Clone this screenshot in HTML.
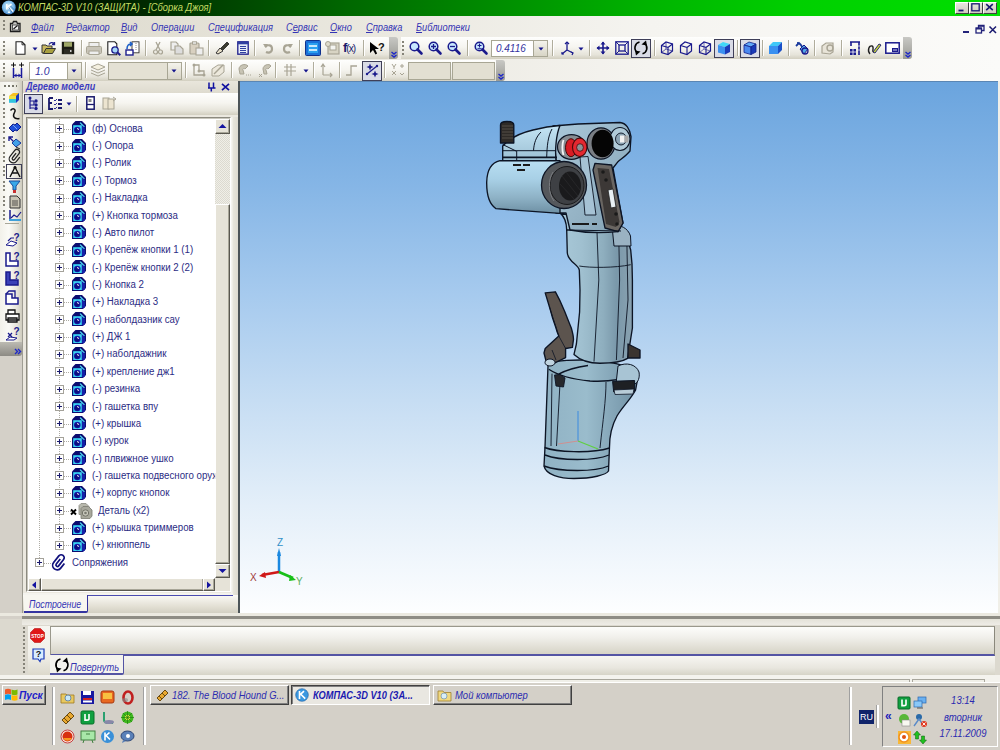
<!DOCTYPE html>
<html><head><meta charset="utf-8">
<style>
*{margin:0;padding:0;box-sizing:border-box}
html,body{width:1000px;height:750px;overflow:hidden;background:#d4d0c8;font-family:"Liberation Sans",sans-serif;position:relative}
.a{position:absolute}
svg{position:absolute;overflow:visible}
#title{left:0;top:0;width:1000px;height:16px;background:linear-gradient(90deg,#000 0%,#001a00 10%,#003c00 20%,#006800 35%,#008e00 50%,#00b400 65%,#00d000 80%,#00e000 100%);}
#ttext{left:18px;top:2px;font-size:10px;font-style:italic;color:#c4dc64;white-space:nowrap;transform:scaleX(0.936);transform-origin:0 0;letter-spacing:0}
.wb{top:2px;width:14px;height:12px;background:linear-gradient(180deg,#e8e6e0,#d0ccc0);border:1px solid #fff;border-right-color:#404040;border-bottom-color:#404040}
#menubar{left:0;top:16px;width:1000px;height:65px;background:linear-gradient(90deg,#dcd9cc 0%,#e9e7de 35%,#f5f4f0 65%,#fbfbf9 100%);}
.menu{top:21px;font-size:10.5px;font-style:italic;color:#3434b4;white-space:nowrap;transform:scaleX(0.88);transform-origin:0 0}
.menu u{text-decoration:underline;text-underline-offset:1px}
.tb{background:linear-gradient(180deg,#fefefd 0%,#f6f5f0 45%,#e6e4da 80%,#d2cfc0 100%);border-radius:0 3px 3px 0;}
.sep{width:1px;background:#b0ad9c;border-right:1px solid #fff;width:2px}
.grip{width:2px;background:repeating-linear-gradient(180deg,#858378 0 2px,transparent 2px 4px)}
.chev{background:linear-gradient(180deg,#c8c8c4,#9a9a94);border-radius:0 3px 3px 0}
.combo{background:#fff;border:1px solid #a8a694}
.combo .dd{position:absolute;right:0;top:0;bottom:0;width:14px;background:linear-gradient(180deg,#f4f3ec,#d8d5c6);border-left:1px solid #a8a694}
.pressed{background:#d9dbe6;border:1px solid #3f3f58}
</style></head><body>

<div id="title" class="a"></div>
<svg style="left:1px;top:0px" width="16" height="16" viewBox="0 0 16 16"><defs><radialGradient id="kg" cx="45%" cy="40%" r="65%"><stop offset="0" stop-color="#d8f4ff"/><stop offset=".6" stop-color="#7ab8e8"/><stop offset="1" stop-color="#3a78c0"/></radialGradient></defs><circle cx="7.8" cy="7.5" r="6.9" fill="url(#kg)"/><path d="M5.8 4v5.5M5.9 7.3L10.5 4.2M7 7.2l5.3 4.3" stroke="#fff" stroke-width="1.6" fill="none"/><path d="M7.8 7.5l3 4.5M9.5 6l4 4" stroke="#3a70a8" stroke-width=".8" fill="none"/><path d="M6.5 13l1.5-2.5 1.5 2.5z" fill="#f0fcff"/></svg>
<div id="ttext" class="a">КОМПАС-3D V10 (ЗАЩИТА) - [Сборка Джоя]</div>
<div class="a wb" style="left:955px"></div>
<svg style="left:955px;top:1px" width="14" height="13" viewBox="0 0 14 13"><path d="M3.5 9.5h5" stroke="#1a1a70" stroke-width="1.8"/></svg>
<div class="a wb" style="left:969px"></div>
<svg style="left:969px;top:1px" width="14" height="13" viewBox="0 0 14 13"><rect x="2.8" y="2.8" width="7.4" height="7" fill="none" stroke="#1a1a70" stroke-width="1.3"/></svg>
<div class="a wb" style="left:983px"></div>
<svg style="left:983px;top:1px" width="14" height="13" viewBox="0 0 14 13"><path d="M3.2 3.2l6.6 6M9.8 3.2l-6.6 6" stroke="#1a1a70" stroke-width="1.6"/></svg>
<div id="menubar" class="a"></div>
<div class="a grip" style="left:3px;top:20px;height:11px"></div>
<svg style="left:9px;top:20px" width="13" height="13" viewBox="0 0 13 13"><path d="M1.5 3.5h2l1-2h3l1 2h2.5v8h-9.5z" fill="#c8c8c4" stroke="#1e1e1e" stroke-width="1.3"/><rect x="3.5" y="5" width="6" height="5" fill="#f4f4f4" stroke="#333" stroke-width=".8"/><path d="M4.5 9l4-3.5" stroke="#111" stroke-width="1.1"/></svg>
<div class="a menu" style="left:31px"><u>Ф</u>айл</div>
<div class="a menu" style="left:66px"><u>Р</u>едактор</div>
<div class="a menu" style="left:121px"><u>В</u>ид</div>
<div class="a menu" style="left:151px">Опера<u>ц</u>ии</div>
<div class="a menu" style="left:208px">С<u>п</u>ецификация</div>
<div class="a menu" style="left:286px">С<u>е</u>рвис</div>
<div class="a menu" style="left:330px"><u>О</u>кно</div>
<div class="a menu" style="left:366px"><u>С</u>правка</div>
<div class="a menu" style="left:416px"><u>Б</u>иблиотеки</div>
<svg style="left:961px;top:24px" width="10" height="10" viewBox="0 0 10 10"><path d="M2 8h6" stroke="#23237a" stroke-width="2"/></svg>
<svg style="left:975px;top:24px" width="10" height="10" viewBox="0 0 10 10"><rect x="1" y="4" width="5.5" height="5" fill="none" stroke="#23237a" stroke-width="1.3"/><path d="M3.5 4V1.5h5.5v5H6.5" fill="none" stroke="#23237a" stroke-width="1.3"/><path d="M1 4.6h5.5M3.5 2h5.5" stroke="#23237a" stroke-width="1.6"/></svg>
<svg style="left:988px;top:25px" width="10" height="10" viewBox="0 0 10 10"><path d="M1.5 1.5l6.5 6.5M8 1.5L1.5 8" stroke="#1a1a70" stroke-width="1.5"/></svg>
<div class="a tb" style="left:0px;top:37px;width:390px;height:22px"></div>
<div class="a chev" style="left:389px;top:37px;width:9px;height:22px"></div>
<svg style="left:390px;top:51px" width="8" height="7" viewBox="0 0 8 7"><path d="M1.5 1l2.5 2 2.5-2M1.5 4l2.5 2 2.5-2" stroke="#1e28c8" stroke-width="1.4" fill="none"/></svg>
<div class="a tb" style="left:401px;top:37px;width:503px;height:22px"></div>
<div class="a chev" style="left:903px;top:37px;width:9px;height:22px"></div>
<svg style="left:904px;top:51px" width="8" height="7" viewBox="0 0 8 7"><path d="M1.5 1l2.5 2 2.5-2M1.5 4l2.5 2 2.5-2" stroke="#1e28c8" stroke-width="1.4" fill="none"/></svg>
<div class="a tb" style="left:0px;top:60px;width:497px;height:21px"></div>
<div class="a chev" style="left:496px;top:60px;width:9px;height:21px"></div>
<svg style="left:497px;top:73px" width="8" height="7" viewBox="0 0 8 7"><path d="M1.5 1l2.5 2 2.5-2M1.5 4l2.5 2 2.5-2" stroke="#1e28c8" stroke-width="1.4" fill="none"/></svg>
<div class="a grip" style="left:3px;top:41px;height:14px"></div>
<div class="a grip" style="left:402px;top:41px;height:14px"></div>
<div class="a grip" style="left:3px;top:63px;height:14px"></div>
<svg style="left:15px;top:41px" width="11" height="14" viewBox="0 0 11 14"><path d="M1 .8h6l3 3v9.4H1z" fill="#fff" stroke="#222" stroke-width="1.1"/><path d="M7 .8v3h3" fill="none" stroke="#222" stroke-width=".9"/></svg>
<svg style="left:32px;top:47px" width="6" height="4" viewBox="0 0 6 4"><path d="M0.5 0.5h5L3 3.5z" fill="#14148c"/></svg>
<svg style="left:41px;top:41px" width="15" height="14" viewBox="0 0 15 14"><path d="M1 4h4l1 1h5v7H1z" fill="#c8b860" stroke="#333" stroke-width="1"/><path d="M2.5 12.5l2.5-5h9.5l-3 5z" fill="#a8a040" stroke="#333" stroke-width="1"/><path d="M8 3.5c1-2 3.5-2.5 5-1M13.5 1v2.5H11" fill="none" stroke="#20208c" stroke-width="1.3"/></svg>
<svg style="left:61px;top:41px" width="14" height="14" viewBox="0 0 14 14"><rect x=".8" y=".8" width="12.4" height="12.4" fill="#1c1c14" /><rect x="3" y="1.2" width="8" height="4.5" fill="#a0a868"/><rect x="3" y="8" width="8" height="5" fill="#2c2c24"/><rect x="9" y="9" width="1.5" height="2" fill="#ccc"/></svg>
<div class="a sep" style="left:81px;top:40px;height:16px"></div>
<svg style="left:86px;top:42px" width="16" height="13" viewBox="0 0 16 13"><rect x="3" y="0.5" width="10" height="5" fill="#eee" stroke="#a8a494"/><rect x=".5" y="4.5" width="15" height="7" rx="1" fill="#c8c4b8" stroke="#a8a494"/><rect x="3" y="9" width="10" height="3.5" fill="#eee" stroke="#a8a494"/></svg>
<svg style="left:107px;top:41px" width="14" height="15" viewBox="0 0 14 15"><path d="M.8 .8h7l2 2v11H.8z" fill="#fff" stroke="#222" stroke-width="1.1"/><circle cx="8" cy="9" r="3.2" fill="#a8d8f8" stroke="#1e1e8c" stroke-width="1.3"/><path d="M10.3 11.3l3 3" stroke="#1e1e8c" stroke-width="2"/></svg>
<svg style="left:125px;top:41px" width="15" height="15" viewBox="0 0 15 15"><rect x="7" y=".8" width="7" height="11" fill="#fff" stroke="#333" stroke-width=".9"/><path d="M11 2v8" stroke="#888" stroke-dasharray="1 1"/><rect x="1" y="9" width="7" height="5" fill="#fff" stroke="#1e1e8c" stroke-width="1.4"/><path d="M2 8C2 4 4 3 6 3M5 1l2 2-2 2" fill="none" stroke="#1e60c8" stroke-width="1.6"/></svg>
<div class="a sep" style="left:145px;top:40px;height:16px"></div>
<svg style="left:153px;top:41px" width="10" height="14" viewBox="0 0 10 14"><path d="M3 1l4 8M7 1l-4 8" stroke="#a8a494" stroke-width="1.3"/><circle cx="2.5" cy="11" r="2" fill="none" stroke="#a8a494" stroke-width="1.2"/><circle cx="7.5" cy="11" r="2" fill="none" stroke="#a8a494" stroke-width="1.2"/></svg>
<svg style="left:170px;top:41px" width="14" height="14" viewBox="0 0 14 14"><path d="M1 1h5l2 2v6H1z" fill="#eee" stroke="#a8a494" stroke-width="1.2"/><path d="M5 5h5l3 3v5H5z" fill="#ddd" stroke="#a8a494" stroke-width="1.2"/></svg>
<svg style="left:189px;top:41px" width="15" height="15" viewBox="0 0 15 15"><rect x="1" y="2" width="9" height="11" rx="1" fill="#d8d0c0" stroke="#a8a494" stroke-width="1.2"/><rect x="3.5" y=".8" width="4" height="2.4" fill="#eee" stroke="#a8a494"/><rect x="7" y="7" width="7" height="7" fill="#eee" stroke="#a8a494" stroke-width="1.1"/></svg>
<div class="a sep" style="left:208px;top:40px;height:16px"></div>
<svg style="left:215px;top:41px" width="15" height="14" viewBox="0 0 15 14"><path d="M1 12l4-5 3 3-5 3z" fill="#e8e0c8" stroke="#333" stroke-width="1"/><path d="M6 7l6-6 2 2-6 6z" fill="#3c3c30" stroke="#222" stroke-width=".8"/></svg>
<svg style="left:237px;top:41px" width="12" height="14" viewBox="0 0 12 14"><rect x=".8" y=".8" width="10.4" height="12.4" fill="#e8eef8" stroke="#1e1e8c" stroke-width="1.3"/><rect x=".8" y=".8" width="10.4" height="2.5" fill="#3040a0"/><path d="M3 5.5h6M3 7.5h6M3 9.5h6M3 11.5h6" stroke="#3040a0" stroke-width="1"/></svg>
<div class="a sep" style="left:254px;top:40px;height:16px"></div>
<svg style="left:263px;top:42px" width="11" height="12" viewBox="0 0 11 12"><path d="M2 5c3-3 7-2 7 2s-4 4-6 3" fill="none" stroke="#a8a494" stroke-width="2.2"/><path d="M0 2l3 4 2-4z" fill="#a8a494"/></svg>
<svg style="left:281px;top:42px" width="12" height="12" viewBox="0 0 12 12"><path d="M10 5c-3-3-7-2-7 2s4 4 6 3" fill="none" stroke="#a8a494" stroke-width="2.2"/><path d="M12 2l-3 4-2-4z" fill="#a8a494"/></svg>
<div class="a sep" style="left:299px;top:40px;height:16px"></div>
<svg style="left:305px;top:40px" width="16" height="16" viewBox="0 0 16 16"><rect x=".5" y=".5" width="15" height="15" rx="1" fill="#1a70d8" stroke="#10308c"/><rect x="3" y="3" width="10" height="10" fill="#2aa0f0"/><path d="M4 6h8M4 10h8" stroke="#fff" stroke-width="1.5"/></svg>
<svg style="left:325px;top:41px" width="15" height="14" viewBox="0 0 15 14"><rect x="3" y="2" width="11" height="11" fill="#d8d4c4" stroke="#a8a494" stroke-width="1.2"/><rect x="5" y="4" width="6" height="5" fill="#f4f4f0" stroke="#a8a494"/><circle cx="3" cy="3" r="2.5" fill="#e0dccc" stroke="#a8a494"/></svg>
<div class="a" style="left:343px;top:40px;font-size:13px;color:#1a1a6c;letter-spacing:-1px;font-weight:bold">f<span style="font-size:10px;font-weight:normal">(x)</span></div>
<div class="a sep" style="left:363px;top:40px;height:16px"></div>
<svg style="left:369px;top:40px" width="16" height="16" viewBox="0 0 16 16"><path d="M1 2l0 11 3-3 2.5 4.5 1.6-.9L6 9h4z" fill="#000"/><text x="9" y="11" font-size="11" font-weight="bold" font-family="Liberation Sans" fill="#111">?</text></svg>
<svg style="left:409px;top:41px" width="14" height="14" viewBox="0 0 14 14"><circle cx="5.5" cy="5.5" r="4.3" fill="#c8e8ff" stroke="#1a1a8c" stroke-width="1.5"/><path d="M8.5 8.5l4 4" stroke="#1a1a8c" stroke-width="2.6" stroke-linecap="round"/></svg>
<svg style="left:428px;top:41px" width="14" height="14" viewBox="0 0 14 14"><circle cx="5.5" cy="5.5" r="4.3" fill="#c8e8ff" stroke="#1a1a8c" stroke-width="1.5"/><path d="M3 5.5h5M5.5 3v5" stroke="#1a1a8c" stroke-width="1.3"/><path d="M8.5 8.5l4 4" stroke="#1a1a8c" stroke-width="2.6" stroke-linecap="round"/></svg>
<svg style="left:447px;top:41px" width="14" height="14" viewBox="0 0 14 14"><circle cx="5.5" cy="5.5" r="4.3" fill="#c8e8ff" stroke="#1a1a8c" stroke-width="1.5"/><path d="M3 5.5h5" stroke="#1a1a8c" stroke-width="1.3"/><path d="M8.5 8.5l4 4" stroke="#1a1a8c" stroke-width="2.6" stroke-linecap="round"/></svg>
<div class="a sep" style="left:467px;top:40px;height:16px"></div>
<svg style="left:474px;top:41px" width="14" height="14" viewBox="0 0 14 14"><circle cx="5.5" cy="5.5" r="4.3" fill="#c8e8ff" stroke="#1a1a8c" stroke-width="1.5"/><path d="M3.5 4.5h4M5.5 2.5v4M3.5 7.8h4" stroke="#1a1a8c" stroke-width="1.1"/><path d="M8.5 8.5l4 4" stroke="#1a1a8c" stroke-width="2.6" stroke-linecap="round"/></svg>
<div class="a combo" style="left:491px;top:40px;width:57px;height:17px"><div class="dd"></div></div>
<div class="a" style="left:496px;top:42px;font-size:10.5px;font-style:italic;color:#3232a0;transform:scaleX(.95);transform-origin:0 0">0.4116</div>
<svg style="left:538px;top:47px" width="6" height="4" viewBox="0 0 6 4"><path d="M0.5 0.5h5L3 3.5z" fill="#14148c"/></svg>
<div class="a sep" style="left:552px;top:40px;height:16px"></div>
<svg style="left:561px;top:41px" width="13" height="14" viewBox="0 0 13 14"><path d="M6 1v8M6 9l-5 4M6 9l6 3" stroke="#1a1a8c" stroke-width="1.3" fill="none"/><path d="M4 3l2-2 2 2M1 11v2h2M10 11l2 1-1 2" fill="none" stroke="#1a1a8c" stroke-width="1.2"/></svg>
<svg style="left:578px;top:47px" width="6" height="4" viewBox="0 0 6 4"><path d="M0.5 0.5h5L3 3.5z" fill="#14148c"/></svg>
<div class="a sep" style="left:589px;top:40px;height:16px"></div>
<svg style="left:596px;top:41px" width="14" height="14" viewBox="0 0 14 14"><path d="M7 1v12M1 7h12" stroke="#1a1a8c" stroke-width="1.6"/><path d="M4.5 3.5L7 .5l2.5 3zM4.5 10.5L7 13.5l2.5-3zM3.5 4.5L.5 7l3 2.5zM10.5 4.5l3 2.5-3 2.5z" fill="#1a1a8c"/></svg>
<svg style="left:615px;top:41px" width="14" height="14" viewBox="0 0 14 14"><rect x=".8" y=".8" width="12.4" height="12.4" fill="none" stroke="#1a1a8c" stroke-width="1.3"/><rect x="4" y="4" width="6" height="6" fill="none" stroke="#1a1a8c" stroke-width="1.3"/><path d="M1 1l3 3M13 1l-3 3M1 13l3-3M13 13l-3-3" stroke="#1a1a8c"/></svg>
<div class="a pressed" style="left:631px;top:39px;width:20px;height:19px"></div>
<svg style="left:633px;top:40px" width="16" height="16" viewBox="0 0 16 16"><path d="M6.5,2 A6,6 0 0 0 4.2,12.5" fill="none" stroke="#000" stroke-width="1.6"/><path d="M2,10.5 L7.5,11.5 L3,15.5 Z" fill="#000"/><path d="M9.5,13.8 A6,6 0 0 0 11.8,3.5" fill="none" stroke="#000" stroke-width="1.6"/><path d="M14,5.5 L8.5,4.5 L13,0.5 Z" fill="#000"/></svg>
<div class="a sep" style="left:654px;top:40px;height:16px"></div>
<svg style="left:660px;top:41px" width="14" height="14" viewBox="0 0 14 14"><path d="M1.5 4.5l4.5-3.5 6.5 2v7l-4.5 3.5-6.5-2z" fill="none" stroke="#1a1a8c" stroke-width="1.2"/><path d="M1.5 4.5l6.5 2v7M8 6.5l4.5-3.5" fill="none" stroke="#1a1a8c" stroke-width="1.1"/><path d="M1.5 11.5l4.5-3.5v-7M6 8l6.5 2" stroke="#1a1a8c" stroke-width=".7" fill="none"/></svg>
<svg style="left:679px;top:41px" width="14" height="14" viewBox="0 0 14 14"><path d="M1.5 4.5l4.5-3.5 6.5 2v7l-4.5 3.5-6.5-2z" fill="none" stroke="#1a1a8c" stroke-width="1.2"/><path d="M1.5 4.5l6.5 2v7M8 6.5l4.5-3.5" fill="none" stroke="#1a1a8c" stroke-width="1.1"/></svg>
<svg style="left:698px;top:41px" width="14" height="14" viewBox="0 0 14 14"><path d="M1.5 4.5l4.5-3.5 6.5 2v7l-4.5 3.5-6.5-2z" fill="none" stroke="#1a1a8c" stroke-width="1.2"/><path d="M1.5 4.5l6.5 2v7M8 6.5l4.5-3.5" fill="none" stroke="#1a1a8c" stroke-width="1.1"/><path d="M6 1v7l-4.5 3.5M6 8l6.5 2" stroke="#1a1a8c" stroke-width=".6" fill="none"/></svg>
<div class="a pressed" style="left:714px;top:39px;width:20px;height:19px"></div>
<svg style="left:717px;top:41px" width="14" height="14" viewBox="0 0 14 14"><path d="M1 4l5-3 7 2-5 3z" fill="#40d8f8"/><path d="M1 4l7 2v7.5l-7-2z" fill="#3a90f0"/><path d="M8 6l5-3v8l-5 2.5z" fill="#1a3ab8"/></svg>
<div class="a sep" style="left:737px;top:40px;height:16px"></div>
<div class="a pressed" style="left:740px;top:39px;width:20px;height:19px"></div>
<svg style="left:743px;top:41px" width="14" height="14" viewBox="0 0 14 14"><path d="M1 4l5-3 7 2-5 3z" fill="#60a8f8" stroke="#10208c" stroke-width=".8"/><path d="M1 4l7 2v7.5l-7-2z" fill="#4a88f0" stroke="#10208c" stroke-width=".8"/><path d="M8 6l5-3v8l-5 2.5z" fill="#1a3ab8" stroke="#10208c" stroke-width=".8"/></svg>
<div class="a sep" style="left:762px;top:40px;height:16px"></div>
<svg style="left:768px;top:41px" width="15" height="14" viewBox="0 0 15 14"><path d="M1 5l4-4h9l-4 4z" fill="#40c8f8"/><path d="M1 5h9v8H1z" fill="#3a90f0"/><path d="M10 5l4-4v8l-4 4z" fill="#1a50c8"/></svg>
<div class="a sep" style="left:788px;top:40px;height:16px"></div>
<svg style="left:795px;top:41px" width="14" height="14" viewBox="0 0 14 14"><path d="M2 2c3 0 5 3 6 6M1 5l3-3 2 2" fill="none" stroke="#1a3a9c" stroke-width="1.8"/><path d="M5 8l4-4 4 4-4 5z" fill="#50a8e8" stroke="#1a1a8c"/><circle cx="10" cy="10" r="3" fill="none" stroke="#1a1a8c" stroke-width="1.3"/></svg>
<div class="a sep" style="left:814px;top:40px;height:16px"></div>
<svg style="left:820px;top:41px" width="16" height="14" viewBox="0 0 16 14"><path d="M2 12V5l4-3h7v9l-3 2z" fill="#e8e4d8" stroke="#a8a494" stroke-width="1.2"/><circle cx="10" cy="7" r="3" fill="none" stroke="#a8a494" stroke-width="1.4"/></svg>
<div class="a sep" style="left:841px;top:40px;height:16px"></div>
<svg style="left:849px;top:41px" width="12" height="15" viewBox="0 0 12 15"><path d="M1 1h10M2 1v4M10 1v13" stroke="#1a1a8c" stroke-width="1.6"/><rect x="1" y="8" width="6" height="6" fill="#1a1a8c"/><path d="M4 8v6M1 11h6" stroke="#fff" stroke-width=".8"/><path d="M10 4v2M10 8v2" stroke="#fff" stroke-width=".7"/></svg>
<svg style="left:867px;top:41px" width="14" height="14" viewBox="0 0 14 14"><path d="M3 13C0 10 2 4 5 5s-1 6 2 6" fill="none" stroke="#222" stroke-width="1.4"/><path d="M6 11l6-8 2 1-6 8z" fill="#c8d838" stroke="#1a1a6c" stroke-width=".9"/></svg>
<svg style="left:885px;top:42px" width="15" height="12" viewBox="0 0 15 12"><rect x=".8" y=".8" width="13.4" height="10.4" fill="#fff" stroke="#1a1a8c" stroke-width="1.5"/><rect x="7" y="6" width="6" height="4" fill="#1a1a8c"/><path d="M8 8h4" stroke="#fff" stroke-width=".8"/></svg>
<svg style="left:10px;top:62px" width="15" height="17" viewBox="0 0 15 17"><path d="M3.5 0.5v5M1 3h5M11.5 0.5v5M9 3h5" stroke="#111" stroke-width="1"/><path d="M3.5 1.8l.7 1.2-.7 1.2-.7-1.2zM11.5 1.8l.7 1.2-.7 1.2-.7-1.2z" fill="#111"/><path d="M3.5 6v10M11.5 6v10" stroke="#1a1a9c" stroke-width="1.5"/><path d="M4 13.5h7" stroke="#1a1a9c" stroke-width="1.2"/><path d="M4.3 13.5l2.2-2v4zM10.7 13.5l-2.2-2v4z" fill="#1a1a9c"/></svg>
<div class="a combo" style="left:29px;top:62px;width:53px;height:18px"><div class="dd"></div></div>
<div class="a" style="left:35px;top:65px;font-size:10.5px;font-style:italic;color:#3232a0">1.0</div>
<svg style="left:71px;top:69px" width="6" height="4" viewBox="0 0 6 4"><path d="M0.5 0.5h5L3 3.5z" fill="#14148c"/></svg>
<div class="a sep" style="left:85px;top:62px;height:16px"></div>
<svg style="left:90px;top:63px" width="16" height="14" viewBox="0 0 16 14"><path d="M1 4l7-3 7 3-7 3z" fill="#f4f0e0" stroke="#a8a494"/><path d="M1 7l7 3 7-3M1 10l7 3 7-3" fill="none" stroke="#a8a494"/></svg>
<div class="a" style="left:108px;top:62px;width:74px;height:18px;background:#e4e1d4;border:1px solid #a8a694"><div class="dd" style="position:absolute;right:0;top:0;bottom:0;width:14px;background:linear-gradient(180deg,#f4f3ec,#d8d5c6);border-left:1px solid #a8a694"></div></div>
<svg style="left:171px;top:69px" width="6" height="4" viewBox="0 0 6 4"><path d="M0.5 0.5h5L3 3.5z" fill="#14148c"/></svg>
<div class="a sep" style="left:185px;top:62px;height:16px"></div>
<svg style="left:192px;top:63px" width="14" height="14" viewBox="0 0 14 14"><path d="M2 2v10h10M2 2h5v6h5v4" fill="none" stroke="#a8a494" stroke-width="1.3"/><circle cx="2" cy="2" r="1.5" fill="#a8a494"/><circle cx="12" cy="12" r="1.5" fill="#a8a494"/><circle cx="7" cy="8" r="1.5" fill="#a8a494"/></svg>
<svg style="left:211px;top:63px" width="14" height="14" viewBox="0 0 14 14"><path d="M1 6l6-4h6v7l-5 4H1z" fill="#ece8dc" stroke="#a8a494"/><path d="M3 11l9-9" stroke="#a8a494" stroke-width="1.5"/></svg>
<div class="a sep" style="left:231px;top:62px;height:16px"></div>
<svg style="left:237px;top:63px" width="15" height="14" viewBox="0 0 15 14"><path d="M3 11L2 6c0-4 6-6 9-3l-3 3c-1-1-3 0-2 1l1 4z" fill="#c8c4b4" stroke="#a8a494"/><path d="M9 12h1M11 12h1M13 12h1" stroke="#a8a494"/></svg>
<svg style="left:258px;top:63px" width="14" height="14" viewBox="0 0 14 14"><path d="M6 11L5 6c0-4 6-6 8-3l-3 3c-1-1-3 0-2 1l1 4z" fill="#c8c4b4" stroke="#a8a494"/><path d="M1 11l3 3M4 11l-3 3" stroke="#a8a494"/></svg>
<div class="a sep" style="left:275px;top:62px;height:16px"></div>
<svg style="left:283px;top:63px" width="14" height="14" viewBox="0 0 14 14"><path d="M4 1v12M8 1v12M1 4h12M1 8h12" stroke="#a8a494" stroke-width="1.2"/></svg>
<svg style="left:303px;top:69px" width="6" height="4" viewBox="0 0 6 4"><path d="M0.5 0.5h5L3 3.5z" fill="#14148c"/></svg>
<div class="a sep" style="left:313px;top:62px;height:16px"></div>
<svg style="left:320px;top:63px" width="13" height="14" viewBox="0 0 13 14"><path d="M3 12V2M3 12h9M1 4l2-3 2 3M10 10l2 2-2 2" fill="none" stroke="#a8a494" stroke-width="1.2"/></svg>
<div class="a sep" style="left:339px;top:62px;height:16px"></div>
<svg style="left:345px;top:63px" width="13" height="14" viewBox="0 0 13 14"><path d="M1 12h5V3h6" fill="none" stroke="#a8a494" stroke-width="1.3"/></svg>
<div class="a pressed" style="left:362px;top:61px;width:20px;height:20px"></div>
<svg style="left:365px;top:63px" width="14" height="14" viewBox="0 0 14 14"><path d="M2 11L12 3" stroke="#1a1a8c" stroke-width="1.2"/><path d="M4 3l1-2.5L6 3l2.5 1L6 5l-1 2.5L4 5 1.5 4zM9 10l1-2.5 1 2.5 2.5 1-2.5 1-1 2.5-1-2.5-2.5-1z" fill="#1a1a8c"/><circle cx="2" cy="11" r="1.2" fill="#1a1a8c"/><circle cx="12" cy="3" r="1.2" fill="#1a1a8c"/></svg>
<div class="a sep" style="left:384px;top:62px;height:16px"></div>
<svg style="left:391px;top:63px" width="14" height="14" viewBox="0 0 14 14"><path d="M1 1l2 3 2-3M3 4v2M9 3h4M11 1v4M1 12l4-4M1 8l4 4M9 10l2 2 2-2" fill="none" stroke="#a8a494" stroke-width="1"/></svg>
<div class="a" style="left:408px;top:62px;width:43px;height:18px;background:#e2dfd2;border:1px solid #a8a694"></div>
<div class="a" style="left:452px;top:62px;width:43px;height:18px;background:#e2dfd2;border:1px solid #a8a694"></div>

<div class="a" style="left:0px;top:82px;width:22px;height:262px;background:linear-gradient(90deg,#f2f1ea 0%,#fafaf6 40%,#e8e6dc 75%,#cfccbe 100%)"></div>
<div class="a" style="left:0px;top:342px;width:22px;height:14px;background:linear-gradient(180deg,#bcbab2,#8c8a84);border-radius:0 0 3px 0"></div>
<svg style="left:14px;top:348px" width="8" height="7" viewBox="0 0 8 7"><path d="M1 1l2.5 2.5L1 6M4 1l2.5 2.5L4 6" stroke="#1e28c8" stroke-width="1.4" fill="none"/></svg>
<div class="a" style="left:4px;top:85px;width:13px;height:2px;background:repeating-linear-gradient(90deg,#77766a 0 2px,transparent 2px 4px)"></div>
<div class="a grip" style="left:3px;top:94px;height:10px"></div>
<div class="a grip" style="left:3px;top:108px;height:10px"></div>
<div class="a grip" style="left:3px;top:123px;height:10px"></div>
<div class="a grip" style="left:3px;top:137px;height:10px"></div>
<div class="a grip" style="left:3px;top:152px;height:10px"></div>
<div class="a grip" style="left:3px;top:166px;height:10px"></div>
<div class="a grip" style="left:3px;top:181px;height:10px"></div>
<div class="a grip" style="left:3px;top:196px;height:10px"></div>
<div class="a grip" style="left:3px;top:210px;height:10px"></div>
<div class="a" style="left:5px;top:223px;width:14px;height:1px;background:#a8a698"></div>
<svg style="left:8px;top:92px" width="14" height="14" viewBox="0 0 14 14"><path d="M1 4l4-3h6v3l-3 3H1z" fill="#f8c020"/><rect x="1" y="4" width="7" height="3" fill="#f0e040"/><rect x="1" y="7" width="7" height="3" fill="#40d8a0"/><path d="M8 4l3-3v7l-3 3z" fill="#1838c0"/><rect x="1" y="7" width="7" height="4" fill="#30c0e8" opacity=".8"/></svg>
<svg style="left:8px;top:107px" width="14" height="14" viewBox="0 0 14 14"><path d="M2.5 3.5C5 0.5 8.5 2 6.5 5.5C4.5 9 5.5 12.5 11.5 11.5" fill="none" stroke="#111" stroke-width="1.5"/></svg>
<svg style="left:8px;top:121px" width="14" height="14" viewBox="0 0 14 14"><path d="M1 7l4-4 2 1 2-2 4 4-4 4-2-1-2 2z" fill="#2050d8" stroke="#10208c"/><path d="M5 4l4 4" stroke="#7aa8f8"/></svg>
<svg style="left:8px;top:136px" width="14" height="14" viewBox="0 0 14 14"><path d="M1 1l5 5M1 5V1h4" stroke="#1a1a8c" stroke-width="1.4" fill="none"/><path d="M4 7l4-4 5 4-5 4z" fill="#40a0e8" stroke="#1a3a9c"/><path d="M8 11l4 2" stroke="#222"/></svg>
<svg style="left:7px;top:150px" width="14" height="14" viewBox="0 0 14 14"><path d="M6.5,5 V11.5 A1.5,1.5 0 0 0 9.5,11.5 V3.5 A3,3 0 0 0 3.5,3.5 V12 A4.5,4.5 0 0 0 12.5,12 V6" transform="rotate(38 8 8) translate(0 -1) scale(.9)" fill="none" stroke="#222" stroke-width="1.4"/></svg>
<svg style="left:8px;top:165px" width="14" height="14" viewBox="0 0 14 14"><path d="M2 12L7 2l5 10M4 8h6" fill="none" stroke="#111" stroke-width="1.4"/><circle cx="7" cy="2.5" r="1.5" fill="#111"/></svg>
<svg style="left:8px;top:180px" width="14" height="14" viewBox="0 0 14 14"><path d="M1 1h11L8 6v4H5V6z" fill="#38a8e8" stroke="#1a4a9c"/><rect x="5" y="10" width="3" height="3" fill="#c83030"/></svg>
<svg style="left:9px;top:195px" width="14" height="14" viewBox="0 0 14 14"><path d="M1 1h7l3 3v9H1z" fill="#c8c4b4" stroke="#333"/><path d="M3 6h6M3 8h6M3 10h6" stroke="#333" stroke-width=".8"/></svg>
<svg style="left:8px;top:209px" width="14" height="14" viewBox="0 0 14 14"><path d="M2 1v10h11" fill="none" stroke="#1a1a8c" stroke-width="1.5"/><path d="M3 9l3-3 3 2 4-5" fill="none" stroke="#1a1a8c" stroke-width="1.2"/><rect x="1" y="10" width="12" height="2" fill="#40a0d8"/></svg>
<div class="a pressed" style="left:6px;top:164px;width:16px;height:15px;background:transparent"></div>
<svg style="left:5px;top:233px" width="16" height="15" viewBox="0 0 16 15"><path d="M1 12l5-4 6 2-4 3z" fill="#fff" stroke="#1a1a8c"/><path d="M3 8l3-3h3" stroke="#1a1a8c" fill="none" stroke-width="1.2"/><text x="8.5" y="8" font-size="10" font-weight="bold" font-family="Liberation Sans" fill="#1a1a8c">?</text></svg>
<svg style="left:5px;top:252px" width="16" height="15" viewBox="0 0 16 15"><path d="M1 1h4v8h8v5H1z" fill="#fff" stroke="#1a1a8c" stroke-width="1.5"/><text x="8.5" y="8" font-size="10" font-weight="bold" font-family="Liberation Sans" fill="#1a1a8c">?</text></svg>
<svg style="left:5px;top:271px" width="16" height="15" viewBox="0 0 16 15"><path d="M1 1h4v8h8v5H1z" fill="#3a40b8" stroke="#1a1a8c" stroke-width="1.5"/><text x="8.5" y="8" font-size="10" font-weight="bold" font-family="Liberation Sans" fill="#1a1a8c">?</text></svg>
<svg style="left:5px;top:290px" width="16" height="15" viewBox="0 0 16 15"><path d="M1 4h6v4h6v6H1z" fill="#fff" stroke="#1a1a8c" stroke-width="1.5"/><path d="M1 4l3-3h6v7" fill="none" stroke="#1a1a8c" stroke-width="1.3"/></svg>
<svg style="left:5px;top:309px" width="16" height="15" viewBox="0 0 16 15"><path d="M3 1h7v4H3zM1 5h13v6H1zM3 9h9v4H3z" fill="#fff" stroke="#111" stroke-width="1.3"/></svg>
<svg style="left:5px;top:327px" width="16" height="15" viewBox="0 0 16 15"><path d="M1 13l4-3 7 1-3 2z" fill="#fff" stroke="#1a1a8c"/><path d="M3 6l4 4M7 6l-4 4" stroke="#1a1a8c" stroke-width="1.3"/><text x="8.5" y="8" font-size="10" font-weight="bold" font-family="Liberation Sans" fill="#1a1a8c">?</text></svg>
<div class="a" style="left:22px;top:81px;width:216px;height:532px;background:#ebe8df;border-left:1px solid #a09e94"></div>
<div class="a" style="left:23px;top:81px;width:215px;height:12px;background:linear-gradient(180deg,#e9e6dc,#dedbcf)"></div>
<div class="a" style="left:26px;top:81px;font-size:10px;font-style:italic;color:#3c3cc0;white-space:nowrap;transform:scaleX(.9);transform-origin:0 0;font-weight:bold">Дерево модели</div>
<svg style="left:207px;top:82px" width="9" height="10" viewBox="0 0 9 10"><path d="M2 .5v5.5M6.5 .5v5.5M1 6h7.5M4.3 6v3.5" stroke="#1010a0" stroke-width="1.5" fill="none"/></svg>
<svg style="left:221px;top:83px" width="9" height="8" viewBox="0 0 9 8"><path d="M1 .8l7 6.4M8 .8L1 7.2" stroke="#1010a0" stroke-width="1.7"/></svg>
<div class="a tb" style="left:23px;top:93px;width:215px;height:22px;border-radius:0"></div>
<div class="a pressed" style="left:24px;top:94px;width:19px;height:20px"></div>
<svg style="left:27px;top:96px" width="14" height="15" viewBox="0 0 14 15"><path d="M3 2v11M3 5h4M3 9h4M3 12h4M7 5v4" stroke="#1a1a8c" stroke-width="1.2" fill="none"/><circle cx="3" cy="2" r="1.5" fill="#1a1a8c"/><circle cx="9" cy="5" r="1.7" fill="#1a1a8c"/><circle cx="9" cy="9" r="1.7" fill="#1a1a8c"/><circle cx="9" cy="12.5" r="1.7" fill="#1a1a8c"/></svg>
<svg style="left:48px;top:97px" width="14" height="13" viewBox="0 0 14 13"><path d="M1 1h4M1 1v11h4M1 6h3" stroke="#1a1a6c" stroke-width="1.8" fill="none"/><path d="M6 3l1 1 2-2M6 7l1 1 2-2M6 11l1 1 2-2" stroke="#1a1a8c" stroke-width=".9" fill="none"/><path d="M10 3h4M10 7h4M10 11h4" stroke="#1a1a6c" stroke-width="1.8"/></svg>
<svg style="left:66px;top:102px" width="6" height="4" viewBox="0 0 6 4"><path d="M.5.5h5L3 3.5z" fill="#14148c"/></svg>
<div class="a sep" style="left:76px;top:96px;height:16px"></div>
<svg style="left:86px;top:96px" width="9" height="14" viewBox="0 0 9 14"><rect x=".8" y=".8" width="7.4" height="12.4" fill="#fff" stroke="#1a1a6c" stroke-width="1.5"/><path d="M.8 8.5h7.4" stroke="#1a1a6c" stroke-width="1.3"/><rect x="2.5" y="3" width="3" height="3" fill="#888"/></svg>
<svg style="left:102px;top:96px" width="15" height="14" viewBox="0 0 15 14"><rect x="1" y="2" width="6" height="11" fill="#ece4d0" stroke="#a8a494"/><rect x="6" y="3" width="6" height="10" fill="#ece4d0" stroke="#a8a494"/><path d="M11 1l3 2-3 2" fill="none" stroke="#a8a494"/></svg>
<div class="a" style="left:26px;top:117px;width:205px;height:475px;background:#fff;border:1px solid #8c8a80;border-right-color:#fff;border-bottom-color:#fff"></div>
<div class="a" style="left:27px;top:118px;width:203px;height:473px;border:1px solid #c8c6bc;border-right:0;border-bottom:0"></div>
<div class="a" style="left:215px;top:119px;width:15px;height:459px;background:repeating-conic-gradient(#f0efe8 0% 25%,#dcdad0 0% 50%) 0 0/2px 2px"></div>
<div class="a" style="left:215px;top:119px;width:15px;height:15px;background:#e6e3d8;border:1px solid #fff;border-right-color:#5a5850;border-bottom-color:#5a5850;box-shadow:inset -1px -1px 0 #a8a698;"></div>
<svg style="left:218px;top:123px" width="9" height="6" viewBox="0 0 9 6"><path d="M.5 5h8L4.5 1z" fill="#1414a0"/></svg>
<div class="a" style="left:215px;top:204px;width:15px;height:360px;background:#e6e3d8;border:1px solid #fff;border-right-color:#5a5850;border-bottom-color:#5a5850;box-shadow:inset -1px -1px 0 #a8a698;"></div>
<div class="a" style="left:215px;top:564px;width:15px;height:14px;background:#e6e3d8;border:1px solid #fff;border-right-color:#5a5850;border-bottom-color:#5a5850;box-shadow:inset -1px -1px 0 #a8a698;"></div>
<svg style="left:218px;top:568px" width="9" height="6" viewBox="0 0 9 6"><path d="M.5 1h8L4.5 5z" fill="#1414a0"/></svg>
<div class="a" style="left:28px;top:578px;width:187px;height:13px;background:repeating-conic-gradient(#f0efe8 0% 25%,#dcdad0 0% 50%) 0 0/2px 2px"></div>
<div class="a" style="left:28px;top:578px;width:13px;height:13px;background:#e6e3d8;border:1px solid #fff;border-right-color:#5a5850;border-bottom-color:#5a5850;box-shadow:inset -1px -1px 0 #a8a698;"></div>
<svg style="left:31px;top:581px" width="6" height="8" viewBox="0 0 6 8"><path d="M5 .5v7L1 4z" fill="#1414a0"/></svg>
<div class="a" style="left:41px;top:578px;width:163px;height:13px;background:#e6e3d8;border:1px solid #fff;border-right-color:#5a5850;border-bottom-color:#5a5850;box-shadow:inset -1px -1px 0 #a8a698;"></div>
<div class="a" style="left:203px;top:578px;width:12px;height:13px;background:#e6e3d8;border:1px solid #fff;border-right-color:#5a5850;border-bottom-color:#5a5850;box-shadow:inset -1px -1px 0 #a8a698;"></div>
<svg style="left:206px;top:581px" width="6" height="8" viewBox="0 0 6 8"><path d="M1 .5v7L5 4z" fill="#1414a0"/></svg>
<div class="a" style="left:215px;top:578px;width:15px;height:13px;background:#e6e3d8"></div>
<div class="a" style="left:231px;top:117px;width:7px;height:478px;background:linear-gradient(90deg,#f6f5f0 0px,#f6f5f0 1px,#e8e6dc 2px,#dedbd0 7px)"></div>
<div class="a" style="left:39px;top:119px;width:1px;height:443.7px;background:repeating-linear-gradient(180deg,#aeaca4 0 1px,transparent 1px 2px)"></div>
<div class="a" style="left:59px;top:119px;width:1px;height:426.3px;background:repeating-linear-gradient(180deg,#aeaca4 0 1px,transparent 1px 2px)"></div>
<svg style="left:55px;top:124.2px" width="9" height="9" viewBox="0 0 9 9"><rect x=".5" y=".5" width="8" height="8" fill="#fff" stroke="#a4a29a"/><path d="M2 4.5h5M4.5 2v5" stroke="#1a1a6c" stroke-width="1.1"/></svg>
<div class="a" style="left:64px;top:128.7px;width:7px;height:1px;background:repeating-linear-gradient(90deg,#aeaca4 0 1px,transparent 1px 2px)"></div>
<svg style="left:72px;top:121.2px" width="14" height="14" viewBox="0 0 14 14"><path d="M0 3.5L3.5 0H10l4 4v7l-3 3H0z" fill="#0c0c70"/><rect x="1.2" y="4.2" width="8.6" height="8.8" fill="#3ad4f4"/><path d="M8.5 1.2l4.3 4.3-.9.9L7.6 2.1z" fill="#50e0f8"/><path d="M10 4.5l3 2.5v5.5l-3 1z" fill="#1420a8"/><circle cx="5.3" cy="9" r="3.3" fill="#1818a8"/><circle cx="5" cy="9.3" r="2.2" fill="#0c0c80"/><path d="M5.2 7.4l1.6 1.2" stroke="#fff" stroke-width="1.1"/></svg>
<div class="a" style="left:92px;top:122.7px;font-size:10px;color:#2c2c84;white-space:nowrap;width:127px;overflow:hidden;transform:scaleX(.97);transform-origin:0 0">(ф) Основа</div>
<svg style="left:55px;top:141.6px" width="9" height="9" viewBox="0 0 9 9"><rect x=".5" y=".5" width="8" height="8" fill="#fff" stroke="#a4a29a"/><path d="M2 4.5h5M4.5 2v5" stroke="#1a1a6c" stroke-width="1.1"/></svg>
<div class="a" style="left:64px;top:146.1px;width:7px;height:1px;background:repeating-linear-gradient(90deg,#aeaca4 0 1px,transparent 1px 2px)"></div>
<svg style="left:72px;top:138.6px" width="14" height="14" viewBox="0 0 14 14"><path d="M0 3.5L3.5 0H10l4 4v7l-3 3H0z" fill="#0c0c70"/><rect x="1.2" y="4.2" width="8.6" height="8.8" fill="#3ad4f4"/><path d="M8.5 1.2l4.3 4.3-.9.9L7.6 2.1z" fill="#50e0f8"/><path d="M10 4.5l3 2.5v5.5l-3 1z" fill="#1420a8"/><circle cx="5.3" cy="9" r="3.3" fill="#1818a8"/><circle cx="5" cy="9.3" r="2.2" fill="#0c0c80"/><path d="M5.2 7.4l1.6 1.2" stroke="#fff" stroke-width="1.1"/></svg>
<div class="a" style="left:92px;top:140.1px;font-size:10px;color:#2c2c84;white-space:nowrap;width:127px;overflow:hidden;transform:scaleX(.97);transform-origin:0 0">(-) Опора</div>
<svg style="left:55px;top:158.9px" width="9" height="9" viewBox="0 0 9 9"><rect x=".5" y=".5" width="8" height="8" fill="#fff" stroke="#a4a29a"/><path d="M2 4.5h5M4.5 2v5" stroke="#1a1a6c" stroke-width="1.1"/></svg>
<div class="a" style="left:64px;top:163.4px;width:7px;height:1px;background:repeating-linear-gradient(90deg,#aeaca4 0 1px,transparent 1px 2px)"></div>
<svg style="left:72px;top:155.9px" width="14" height="14" viewBox="0 0 14 14"><path d="M0 3.5L3.5 0H10l4 4v7l-3 3H0z" fill="#0c0c70"/><rect x="1.2" y="4.2" width="8.6" height="8.8" fill="#3ad4f4"/><path d="M8.5 1.2l4.3 4.3-.9.9L7.6 2.1z" fill="#50e0f8"/><path d="M10 4.5l3 2.5v5.5l-3 1z" fill="#1420a8"/><circle cx="5.3" cy="9" r="3.3" fill="#1818a8"/><circle cx="5" cy="9.3" r="2.2" fill="#0c0c80"/><path d="M5.2 7.4l1.6 1.2" stroke="#fff" stroke-width="1.1"/></svg>
<div class="a" style="left:92px;top:157.4px;font-size:10px;color:#2c2c84;white-space:nowrap;width:127px;overflow:hidden;transform:scaleX(.97);transform-origin:0 0">(-) Ролик</div>
<svg style="left:55px;top:176.3px" width="9" height="9" viewBox="0 0 9 9"><rect x=".5" y=".5" width="8" height="8" fill="#fff" stroke="#a4a29a"/><path d="M2 4.5h5M4.5 2v5" stroke="#1a1a6c" stroke-width="1.1"/></svg>
<div class="a" style="left:64px;top:180.8px;width:7px;height:1px;background:repeating-linear-gradient(90deg,#aeaca4 0 1px,transparent 1px 2px)"></div>
<svg style="left:72px;top:173.3px" width="14" height="14" viewBox="0 0 14 14"><path d="M0 3.5L3.5 0H10l4 4v7l-3 3H0z" fill="#0c0c70"/><rect x="1.2" y="4.2" width="8.6" height="8.8" fill="#3ad4f4"/><path d="M8.5 1.2l4.3 4.3-.9.9L7.6 2.1z" fill="#50e0f8"/><path d="M10 4.5l3 2.5v5.5l-3 1z" fill="#1420a8"/><circle cx="5.3" cy="9" r="3.3" fill="#1818a8"/><circle cx="5" cy="9.3" r="2.2" fill="#0c0c80"/><path d="M5.2 7.4l1.6 1.2" stroke="#fff" stroke-width="1.1"/></svg>
<div class="a" style="left:92px;top:174.8px;font-size:10px;color:#2c2c84;white-space:nowrap;width:127px;overflow:hidden;transform:scaleX(.97);transform-origin:0 0">(-) Тормоз</div>
<svg style="left:55px;top:193.6px" width="9" height="9" viewBox="0 0 9 9"><rect x=".5" y=".5" width="8" height="8" fill="#fff" stroke="#a4a29a"/><path d="M2 4.5h5M4.5 2v5" stroke="#1a1a6c" stroke-width="1.1"/></svg>
<div class="a" style="left:64px;top:198.1px;width:7px;height:1px;background:repeating-linear-gradient(90deg,#aeaca4 0 1px,transparent 1px 2px)"></div>
<svg style="left:72px;top:190.6px" width="14" height="14" viewBox="0 0 14 14"><path d="M0 3.5L3.5 0H10l4 4v7l-3 3H0z" fill="#0c0c70"/><rect x="1.2" y="4.2" width="8.6" height="8.8" fill="#3ad4f4"/><path d="M8.5 1.2l4.3 4.3-.9.9L7.6 2.1z" fill="#50e0f8"/><path d="M10 4.5l3 2.5v5.5l-3 1z" fill="#1420a8"/><circle cx="5.3" cy="9" r="3.3" fill="#1818a8"/><circle cx="5" cy="9.3" r="2.2" fill="#0c0c80"/><path d="M5.2 7.4l1.6 1.2" stroke="#fff" stroke-width="1.1"/></svg>
<div class="a" style="left:92px;top:192.1px;font-size:10px;color:#2c2c84;white-space:nowrap;width:127px;overflow:hidden;transform:scaleX(.97);transform-origin:0 0">(-) Накладка</div>
<svg style="left:55px;top:211.0px" width="9" height="9" viewBox="0 0 9 9"><rect x=".5" y=".5" width="8" height="8" fill="#fff" stroke="#a4a29a"/><path d="M2 4.5h5M4.5 2v5" stroke="#1a1a6c" stroke-width="1.1"/></svg>
<div class="a" style="left:64px;top:215.5px;width:7px;height:1px;background:repeating-linear-gradient(90deg,#aeaca4 0 1px,transparent 1px 2px)"></div>
<svg style="left:72px;top:208.0px" width="14" height="14" viewBox="0 0 14 14"><path d="M0 3.5L3.5 0H10l4 4v7l-3 3H0z" fill="#0c0c70"/><rect x="1.2" y="4.2" width="8.6" height="8.8" fill="#3ad4f4"/><path d="M8.5 1.2l4.3 4.3-.9.9L7.6 2.1z" fill="#50e0f8"/><path d="M10 4.5l3 2.5v5.5l-3 1z" fill="#1420a8"/><circle cx="5.3" cy="9" r="3.3" fill="#1818a8"/><circle cx="5" cy="9.3" r="2.2" fill="#0c0c80"/><path d="M5.2 7.4l1.6 1.2" stroke="#fff" stroke-width="1.1"/></svg>
<div class="a" style="left:92px;top:209.5px;font-size:10px;color:#2c2c84;white-space:nowrap;width:127px;overflow:hidden;transform:scaleX(.97);transform-origin:0 0">(+) Кнопка тормоза</div>
<svg style="left:55px;top:228.4px" width="9" height="9" viewBox="0 0 9 9"><rect x=".5" y=".5" width="8" height="8" fill="#fff" stroke="#a4a29a"/><path d="M2 4.5h5M4.5 2v5" stroke="#1a1a6c" stroke-width="1.1"/></svg>
<div class="a" style="left:64px;top:232.9px;width:7px;height:1px;background:repeating-linear-gradient(90deg,#aeaca4 0 1px,transparent 1px 2px)"></div>
<svg style="left:72px;top:225.4px" width="14" height="14" viewBox="0 0 14 14"><path d="M0 3.5L3.5 0H10l4 4v7l-3 3H0z" fill="#0c0c70"/><rect x="1.2" y="4.2" width="8.6" height="8.8" fill="#3ad4f4"/><path d="M8.5 1.2l4.3 4.3-.9.9L7.6 2.1z" fill="#50e0f8"/><path d="M10 4.5l3 2.5v5.5l-3 1z" fill="#1420a8"/><circle cx="5.3" cy="9" r="3.3" fill="#1818a8"/><circle cx="5" cy="9.3" r="2.2" fill="#0c0c80"/><path d="M5.2 7.4l1.6 1.2" stroke="#fff" stroke-width="1.1"/></svg>
<div class="a" style="left:92px;top:226.9px;font-size:10px;color:#2c2c84;white-space:nowrap;width:127px;overflow:hidden;transform:scaleX(.97);transform-origin:0 0">(-) Авто пилот</div>
<svg style="left:55px;top:245.7px" width="9" height="9" viewBox="0 0 9 9"><rect x=".5" y=".5" width="8" height="8" fill="#fff" stroke="#a4a29a"/><path d="M2 4.5h5M4.5 2v5" stroke="#1a1a6c" stroke-width="1.1"/></svg>
<div class="a" style="left:64px;top:250.2px;width:7px;height:1px;background:repeating-linear-gradient(90deg,#aeaca4 0 1px,transparent 1px 2px)"></div>
<svg style="left:72px;top:242.7px" width="14" height="14" viewBox="0 0 14 14"><path d="M0 3.5L3.5 0H10l4 4v7l-3 3H0z" fill="#0c0c70"/><rect x="1.2" y="4.2" width="8.6" height="8.8" fill="#3ad4f4"/><path d="M8.5 1.2l4.3 4.3-.9.9L7.6 2.1z" fill="#50e0f8"/><path d="M10 4.5l3 2.5v5.5l-3 1z" fill="#1420a8"/><circle cx="5.3" cy="9" r="3.3" fill="#1818a8"/><circle cx="5" cy="9.3" r="2.2" fill="#0c0c80"/><path d="M5.2 7.4l1.6 1.2" stroke="#fff" stroke-width="1.1"/></svg>
<div class="a" style="left:92px;top:244.2px;font-size:10px;color:#2c2c84;white-space:nowrap;width:127px;overflow:hidden;transform:scaleX(.97);transform-origin:0 0">(-) Крепёж кнопки 1 (1)</div>
<svg style="left:55px;top:263.1px" width="9" height="9" viewBox="0 0 9 9"><rect x=".5" y=".5" width="8" height="8" fill="#fff" stroke="#a4a29a"/><path d="M2 4.5h5M4.5 2v5" stroke="#1a1a6c" stroke-width="1.1"/></svg>
<div class="a" style="left:64px;top:267.6px;width:7px;height:1px;background:repeating-linear-gradient(90deg,#aeaca4 0 1px,transparent 1px 2px)"></div>
<svg style="left:72px;top:260.1px" width="14" height="14" viewBox="0 0 14 14"><path d="M0 3.5L3.5 0H10l4 4v7l-3 3H0z" fill="#0c0c70"/><rect x="1.2" y="4.2" width="8.6" height="8.8" fill="#3ad4f4"/><path d="M8.5 1.2l4.3 4.3-.9.9L7.6 2.1z" fill="#50e0f8"/><path d="M10 4.5l3 2.5v5.5l-3 1z" fill="#1420a8"/><circle cx="5.3" cy="9" r="3.3" fill="#1818a8"/><circle cx="5" cy="9.3" r="2.2" fill="#0c0c80"/><path d="M5.2 7.4l1.6 1.2" stroke="#fff" stroke-width="1.1"/></svg>
<div class="a" style="left:92px;top:261.6px;font-size:10px;color:#2c2c84;white-space:nowrap;width:127px;overflow:hidden;transform:scaleX(.97);transform-origin:0 0">(-) Крепёж кнопки 2 (2)</div>
<svg style="left:55px;top:280.4px" width="9" height="9" viewBox="0 0 9 9"><rect x=".5" y=".5" width="8" height="8" fill="#fff" stroke="#a4a29a"/><path d="M2 4.5h5M4.5 2v5" stroke="#1a1a6c" stroke-width="1.1"/></svg>
<div class="a" style="left:64px;top:284.9px;width:7px;height:1px;background:repeating-linear-gradient(90deg,#aeaca4 0 1px,transparent 1px 2px)"></div>
<svg style="left:72px;top:277.4px" width="14" height="14" viewBox="0 0 14 14"><path d="M0 3.5L3.5 0H10l4 4v7l-3 3H0z" fill="#0c0c70"/><rect x="1.2" y="4.2" width="8.6" height="8.8" fill="#3ad4f4"/><path d="M8.5 1.2l4.3 4.3-.9.9L7.6 2.1z" fill="#50e0f8"/><path d="M10 4.5l3 2.5v5.5l-3 1z" fill="#1420a8"/><circle cx="5.3" cy="9" r="3.3" fill="#1818a8"/><circle cx="5" cy="9.3" r="2.2" fill="#0c0c80"/><path d="M5.2 7.4l1.6 1.2" stroke="#fff" stroke-width="1.1"/></svg>
<div class="a" style="left:92px;top:278.9px;font-size:10px;color:#2c2c84;white-space:nowrap;width:127px;overflow:hidden;transform:scaleX(.97);transform-origin:0 0">(-) Кнопка 2</div>
<svg style="left:55px;top:297.8px" width="9" height="9" viewBox="0 0 9 9"><rect x=".5" y=".5" width="8" height="8" fill="#fff" stroke="#a4a29a"/><path d="M2 4.5h5M4.5 2v5" stroke="#1a1a6c" stroke-width="1.1"/></svg>
<div class="a" style="left:64px;top:302.3px;width:7px;height:1px;background:repeating-linear-gradient(90deg,#aeaca4 0 1px,transparent 1px 2px)"></div>
<svg style="left:72px;top:294.8px" width="14" height="14" viewBox="0 0 14 14"><path d="M0 3.5L3.5 0H10l4 4v7l-3 3H0z" fill="#0c0c70"/><rect x="1.2" y="4.2" width="8.6" height="8.8" fill="#3ad4f4"/><path d="M8.5 1.2l4.3 4.3-.9.9L7.6 2.1z" fill="#50e0f8"/><path d="M10 4.5l3 2.5v5.5l-3 1z" fill="#1420a8"/><circle cx="5.3" cy="9" r="3.3" fill="#1818a8"/><circle cx="5" cy="9.3" r="2.2" fill="#0c0c80"/><path d="M5.2 7.4l1.6 1.2" stroke="#fff" stroke-width="1.1"/></svg>
<div class="a" style="left:92px;top:296.3px;font-size:10px;color:#2c2c84;white-space:nowrap;width:127px;overflow:hidden;transform:scaleX(.97);transform-origin:0 0">(+) Накладка 3</div>
<svg style="left:55px;top:315.2px" width="9" height="9" viewBox="0 0 9 9"><rect x=".5" y=".5" width="8" height="8" fill="#fff" stroke="#a4a29a"/><path d="M2 4.5h5M4.5 2v5" stroke="#1a1a6c" stroke-width="1.1"/></svg>
<div class="a" style="left:64px;top:319.7px;width:7px;height:1px;background:repeating-linear-gradient(90deg,#aeaca4 0 1px,transparent 1px 2px)"></div>
<svg style="left:72px;top:312.2px" width="14" height="14" viewBox="0 0 14 14"><path d="M0 3.5L3.5 0H10l4 4v7l-3 3H0z" fill="#0c0c70"/><rect x="1.2" y="4.2" width="8.6" height="8.8" fill="#3ad4f4"/><path d="M8.5 1.2l4.3 4.3-.9.9L7.6 2.1z" fill="#50e0f8"/><path d="M10 4.5l3 2.5v5.5l-3 1z" fill="#1420a8"/><circle cx="5.3" cy="9" r="3.3" fill="#1818a8"/><circle cx="5" cy="9.3" r="2.2" fill="#0c0c80"/><path d="M5.2 7.4l1.6 1.2" stroke="#fff" stroke-width="1.1"/></svg>
<div class="a" style="left:92px;top:313.7px;font-size:10px;color:#2c2c84;white-space:nowrap;width:127px;overflow:hidden;transform:scaleX(.97);transform-origin:0 0">(-) наболдазник сау</div>
<svg style="left:55px;top:332.5px" width="9" height="9" viewBox="0 0 9 9"><rect x=".5" y=".5" width="8" height="8" fill="#fff" stroke="#a4a29a"/><path d="M2 4.5h5M4.5 2v5" stroke="#1a1a6c" stroke-width="1.1"/></svg>
<div class="a" style="left:64px;top:337.0px;width:7px;height:1px;background:repeating-linear-gradient(90deg,#aeaca4 0 1px,transparent 1px 2px)"></div>
<svg style="left:72px;top:329.5px" width="14" height="14" viewBox="0 0 14 14"><path d="M0 3.5L3.5 0H10l4 4v7l-3 3H0z" fill="#0c0c70"/><rect x="1.2" y="4.2" width="8.6" height="8.8" fill="#3ad4f4"/><path d="M8.5 1.2l4.3 4.3-.9.9L7.6 2.1z" fill="#50e0f8"/><path d="M10 4.5l3 2.5v5.5l-3 1z" fill="#1420a8"/><circle cx="5.3" cy="9" r="3.3" fill="#1818a8"/><circle cx="5" cy="9.3" r="2.2" fill="#0c0c80"/><path d="M5.2 7.4l1.6 1.2" stroke="#fff" stroke-width="1.1"/></svg>
<div class="a" style="left:92px;top:331.0px;font-size:10px;color:#2c2c84;white-space:nowrap;width:127px;overflow:hidden;transform:scaleX(.97);transform-origin:0 0">(+) ДЖ 1</div>
<svg style="left:55px;top:349.9px" width="9" height="9" viewBox="0 0 9 9"><rect x=".5" y=".5" width="8" height="8" fill="#fff" stroke="#a4a29a"/><path d="M2 4.5h5M4.5 2v5" stroke="#1a1a6c" stroke-width="1.1"/></svg>
<div class="a" style="left:64px;top:354.4px;width:7px;height:1px;background:repeating-linear-gradient(90deg,#aeaca4 0 1px,transparent 1px 2px)"></div>
<svg style="left:72px;top:346.9px" width="14" height="14" viewBox="0 0 14 14"><path d="M0 3.5L3.5 0H10l4 4v7l-3 3H0z" fill="#0c0c70"/><rect x="1.2" y="4.2" width="8.6" height="8.8" fill="#3ad4f4"/><path d="M8.5 1.2l4.3 4.3-.9.9L7.6 2.1z" fill="#50e0f8"/><path d="M10 4.5l3 2.5v5.5l-3 1z" fill="#1420a8"/><circle cx="5.3" cy="9" r="3.3" fill="#1818a8"/><circle cx="5" cy="9.3" r="2.2" fill="#0c0c80"/><path d="M5.2 7.4l1.6 1.2" stroke="#fff" stroke-width="1.1"/></svg>
<div class="a" style="left:92px;top:348.4px;font-size:10px;color:#2c2c84;white-space:nowrap;width:127px;overflow:hidden;transform:scaleX(.97);transform-origin:0 0">(+) наболдажник</div>
<svg style="left:55px;top:367.2px" width="9" height="9" viewBox="0 0 9 9"><rect x=".5" y=".5" width="8" height="8" fill="#fff" stroke="#a4a29a"/><path d="M2 4.5h5M4.5 2v5" stroke="#1a1a6c" stroke-width="1.1"/></svg>
<div class="a" style="left:64px;top:371.7px;width:7px;height:1px;background:repeating-linear-gradient(90deg,#aeaca4 0 1px,transparent 1px 2px)"></div>
<svg style="left:72px;top:364.2px" width="14" height="14" viewBox="0 0 14 14"><path d="M0 3.5L3.5 0H10l4 4v7l-3 3H0z" fill="#0c0c70"/><rect x="1.2" y="4.2" width="8.6" height="8.8" fill="#3ad4f4"/><path d="M8.5 1.2l4.3 4.3-.9.9L7.6 2.1z" fill="#50e0f8"/><path d="M10 4.5l3 2.5v5.5l-3 1z" fill="#1420a8"/><circle cx="5.3" cy="9" r="3.3" fill="#1818a8"/><circle cx="5" cy="9.3" r="2.2" fill="#0c0c80"/><path d="M5.2 7.4l1.6 1.2" stroke="#fff" stroke-width="1.1"/></svg>
<div class="a" style="left:92px;top:365.7px;font-size:10px;color:#2c2c84;white-space:nowrap;width:127px;overflow:hidden;transform:scaleX(.97);transform-origin:0 0">(+) крепление дж1</div>
<svg style="left:55px;top:384.6px" width="9" height="9" viewBox="0 0 9 9"><rect x=".5" y=".5" width="8" height="8" fill="#fff" stroke="#a4a29a"/><path d="M2 4.5h5M4.5 2v5" stroke="#1a1a6c" stroke-width="1.1"/></svg>
<div class="a" style="left:64px;top:389.1px;width:7px;height:1px;background:repeating-linear-gradient(90deg,#aeaca4 0 1px,transparent 1px 2px)"></div>
<svg style="left:72px;top:381.6px" width="14" height="14" viewBox="0 0 14 14"><path d="M0 3.5L3.5 0H10l4 4v7l-3 3H0z" fill="#0c0c70"/><rect x="1.2" y="4.2" width="8.6" height="8.8" fill="#3ad4f4"/><path d="M8.5 1.2l4.3 4.3-.9.9L7.6 2.1z" fill="#50e0f8"/><path d="M10 4.5l3 2.5v5.5l-3 1z" fill="#1420a8"/><circle cx="5.3" cy="9" r="3.3" fill="#1818a8"/><circle cx="5" cy="9.3" r="2.2" fill="#0c0c80"/><path d="M5.2 7.4l1.6 1.2" stroke="#fff" stroke-width="1.1"/></svg>
<div class="a" style="left:92px;top:383.1px;font-size:10px;color:#2c2c84;white-space:nowrap;width:127px;overflow:hidden;transform:scaleX(.97);transform-origin:0 0">(-) резинка</div>
<svg style="left:55px;top:402.0px" width="9" height="9" viewBox="0 0 9 9"><rect x=".5" y=".5" width="8" height="8" fill="#fff" stroke="#a4a29a"/><path d="M2 4.5h5M4.5 2v5" stroke="#1a1a6c" stroke-width="1.1"/></svg>
<div class="a" style="left:64px;top:406.5px;width:7px;height:1px;background:repeating-linear-gradient(90deg,#aeaca4 0 1px,transparent 1px 2px)"></div>
<svg style="left:72px;top:399.0px" width="14" height="14" viewBox="0 0 14 14"><path d="M0 3.5L3.5 0H10l4 4v7l-3 3H0z" fill="#0c0c70"/><rect x="1.2" y="4.2" width="8.6" height="8.8" fill="#3ad4f4"/><path d="M8.5 1.2l4.3 4.3-.9.9L7.6 2.1z" fill="#50e0f8"/><path d="M10 4.5l3 2.5v5.5l-3 1z" fill="#1420a8"/><circle cx="5.3" cy="9" r="3.3" fill="#1818a8"/><circle cx="5" cy="9.3" r="2.2" fill="#0c0c80"/><path d="M5.2 7.4l1.6 1.2" stroke="#fff" stroke-width="1.1"/></svg>
<div class="a" style="left:92px;top:400.5px;font-size:10px;color:#2c2c84;white-space:nowrap;width:127px;overflow:hidden;transform:scaleX(.97);transform-origin:0 0">(-) гашетка впу</div>
<svg style="left:55px;top:419.3px" width="9" height="9" viewBox="0 0 9 9"><rect x=".5" y=".5" width="8" height="8" fill="#fff" stroke="#a4a29a"/><path d="M2 4.5h5M4.5 2v5" stroke="#1a1a6c" stroke-width="1.1"/></svg>
<div class="a" style="left:64px;top:423.8px;width:7px;height:1px;background:repeating-linear-gradient(90deg,#aeaca4 0 1px,transparent 1px 2px)"></div>
<svg style="left:72px;top:416.3px" width="14" height="14" viewBox="0 0 14 14"><path d="M0 3.5L3.5 0H10l4 4v7l-3 3H0z" fill="#0c0c70"/><rect x="1.2" y="4.2" width="8.6" height="8.8" fill="#3ad4f4"/><path d="M8.5 1.2l4.3 4.3-.9.9L7.6 2.1z" fill="#50e0f8"/><path d="M10 4.5l3 2.5v5.5l-3 1z" fill="#1420a8"/><circle cx="5.3" cy="9" r="3.3" fill="#1818a8"/><circle cx="5" cy="9.3" r="2.2" fill="#0c0c80"/><path d="M5.2 7.4l1.6 1.2" stroke="#fff" stroke-width="1.1"/></svg>
<div class="a" style="left:92px;top:417.8px;font-size:10px;color:#2c2c84;white-space:nowrap;width:127px;overflow:hidden;transform:scaleX(.97);transform-origin:0 0">(+) крышка</div>
<svg style="left:55px;top:436.7px" width="9" height="9" viewBox="0 0 9 9"><rect x=".5" y=".5" width="8" height="8" fill="#fff" stroke="#a4a29a"/><path d="M2 4.5h5M4.5 2v5" stroke="#1a1a6c" stroke-width="1.1"/></svg>
<div class="a" style="left:64px;top:441.2px;width:7px;height:1px;background:repeating-linear-gradient(90deg,#aeaca4 0 1px,transparent 1px 2px)"></div>
<svg style="left:72px;top:433.7px" width="14" height="14" viewBox="0 0 14 14"><path d="M0 3.5L3.5 0H10l4 4v7l-3 3H0z" fill="#0c0c70"/><rect x="1.2" y="4.2" width="8.6" height="8.8" fill="#3ad4f4"/><path d="M8.5 1.2l4.3 4.3-.9.9L7.6 2.1z" fill="#50e0f8"/><path d="M10 4.5l3 2.5v5.5l-3 1z" fill="#1420a8"/><circle cx="5.3" cy="9" r="3.3" fill="#1818a8"/><circle cx="5" cy="9.3" r="2.2" fill="#0c0c80"/><path d="M5.2 7.4l1.6 1.2" stroke="#fff" stroke-width="1.1"/></svg>
<div class="a" style="left:92px;top:435.2px;font-size:10px;color:#2c2c84;white-space:nowrap;width:127px;overflow:hidden;transform:scaleX(.97);transform-origin:0 0">(-) курок</div>
<svg style="left:55px;top:454.0px" width="9" height="9" viewBox="0 0 9 9"><rect x=".5" y=".5" width="8" height="8" fill="#fff" stroke="#a4a29a"/><path d="M2 4.5h5M4.5 2v5" stroke="#1a1a6c" stroke-width="1.1"/></svg>
<div class="a" style="left:64px;top:458.5px;width:7px;height:1px;background:repeating-linear-gradient(90deg,#aeaca4 0 1px,transparent 1px 2px)"></div>
<svg style="left:72px;top:451.0px" width="14" height="14" viewBox="0 0 14 14"><path d="M0 3.5L3.5 0H10l4 4v7l-3 3H0z" fill="#0c0c70"/><rect x="1.2" y="4.2" width="8.6" height="8.8" fill="#3ad4f4"/><path d="M8.5 1.2l4.3 4.3-.9.9L7.6 2.1z" fill="#50e0f8"/><path d="M10 4.5l3 2.5v5.5l-3 1z" fill="#1420a8"/><circle cx="5.3" cy="9" r="3.3" fill="#1818a8"/><circle cx="5" cy="9.3" r="2.2" fill="#0c0c80"/><path d="M5.2 7.4l1.6 1.2" stroke="#fff" stroke-width="1.1"/></svg>
<div class="a" style="left:92px;top:452.5px;font-size:10px;color:#2c2c84;white-space:nowrap;width:127px;overflow:hidden;transform:scaleX(.97);transform-origin:0 0">(-) плвижное ушко</div>
<svg style="left:55px;top:471.4px" width="9" height="9" viewBox="0 0 9 9"><rect x=".5" y=".5" width="8" height="8" fill="#fff" stroke="#a4a29a"/><path d="M2 4.5h5M4.5 2v5" stroke="#1a1a6c" stroke-width="1.1"/></svg>
<div class="a" style="left:64px;top:475.9px;width:7px;height:1px;background:repeating-linear-gradient(90deg,#aeaca4 0 1px,transparent 1px 2px)"></div>
<svg style="left:72px;top:468.4px" width="14" height="14" viewBox="0 0 14 14"><path d="M0 3.5L3.5 0H10l4 4v7l-3 3H0z" fill="#0c0c70"/><rect x="1.2" y="4.2" width="8.6" height="8.8" fill="#3ad4f4"/><path d="M8.5 1.2l4.3 4.3-.9.9L7.6 2.1z" fill="#50e0f8"/><path d="M10 4.5l3 2.5v5.5l-3 1z" fill="#1420a8"/><circle cx="5.3" cy="9" r="3.3" fill="#1818a8"/><circle cx="5" cy="9.3" r="2.2" fill="#0c0c80"/><path d="M5.2 7.4l1.6 1.2" stroke="#fff" stroke-width="1.1"/></svg>
<div class="a" style="left:92px;top:469.9px;font-size:10px;color:#2c2c84;white-space:nowrap;width:127px;overflow:hidden;transform:scaleX(.97);transform-origin:0 0">(-) гашетка подвесного оруж</div>
<svg style="left:55px;top:488.8px" width="9" height="9" viewBox="0 0 9 9"><rect x=".5" y=".5" width="8" height="8" fill="#fff" stroke="#a4a29a"/><path d="M2 4.5h5M4.5 2v5" stroke="#1a1a6c" stroke-width="1.1"/></svg>
<div class="a" style="left:64px;top:493.3px;width:7px;height:1px;background:repeating-linear-gradient(90deg,#aeaca4 0 1px,transparent 1px 2px)"></div>
<svg style="left:72px;top:485.8px" width="14" height="14" viewBox="0 0 14 14"><path d="M0 3.5L3.5 0H10l4 4v7l-3 3H0z" fill="#0c0c70"/><rect x="1.2" y="4.2" width="8.6" height="8.8" fill="#3ad4f4"/><path d="M8.5 1.2l4.3 4.3-.9.9L7.6 2.1z" fill="#50e0f8"/><path d="M10 4.5l3 2.5v5.5l-3 1z" fill="#1420a8"/><circle cx="5.3" cy="9" r="3.3" fill="#1818a8"/><circle cx="5" cy="9.3" r="2.2" fill="#0c0c80"/><path d="M5.2 7.4l1.6 1.2" stroke="#fff" stroke-width="1.1"/></svg>
<div class="a" style="left:92px;top:487.3px;font-size:10px;color:#2c2c84;white-space:nowrap;width:127px;overflow:hidden;transform:scaleX(.97);transform-origin:0 0">(+) корпус кнопок</div>
<svg style="left:55px;top:506.1px" width="9" height="9" viewBox="0 0 9 9"><rect x=".5" y=".5" width="8" height="8" fill="#fff" stroke="#a4a29a"/><path d="M2 4.5h5M4.5 2v5" stroke="#1a1a6c" stroke-width="1.1"/></svg>
<div class="a" style="left:64px;top:510.6px;width:7px;height:1px;background:repeating-linear-gradient(90deg,#aeaca4 0 1px,transparent 1px 2px)"></div>
<svg style="left:69px;top:502.6px" width="25" height="16" viewBox="0 0 25 16"><path d="M2 6.5l5 5M7 6.5l-5 5" stroke="#000" stroke-width="1.9"/><path d="M10 2.5L12 .5h5l3 3v6l-2 2h-8z" fill="#b8b8ac" stroke="#8a8a80" stroke-width=".8"/><path d="M12 5.5l2-2h5.5l3.5 3.5v6l-2 2.5h-9z" fill="#a8a89c" stroke="#7a7a70" stroke-width=".8"/><circle cx="16.5" cy="10" r="3.2" fill="#c8c8bc" stroke="#6a6a60" stroke-width=".9"/><circle cx="16.5" cy="10" r="1.3" fill="#7a7a70"/></svg>
<div class="a" style="left:98px;top:504.6px;font-size:10px;color:#2c2c84;white-space:nowrap;transform:scaleX(.97);transform-origin:0 0">Деталь (x2)</div>
<svg style="left:55px;top:523.5px" width="9" height="9" viewBox="0 0 9 9"><rect x=".5" y=".5" width="8" height="8" fill="#fff" stroke="#a4a29a"/><path d="M2 4.5h5M4.5 2v5" stroke="#1a1a6c" stroke-width="1.1"/></svg>
<div class="a" style="left:64px;top:528.0px;width:7px;height:1px;background:repeating-linear-gradient(90deg,#aeaca4 0 1px,transparent 1px 2px)"></div>
<svg style="left:72px;top:520.5px" width="14" height="14" viewBox="0 0 14 14"><path d="M0 3.5L3.5 0H10l4 4v7l-3 3H0z" fill="#0c0c70"/><rect x="1.2" y="4.2" width="8.6" height="8.8" fill="#3ad4f4"/><path d="M8.5 1.2l4.3 4.3-.9.9L7.6 2.1z" fill="#50e0f8"/><path d="M10 4.5l3 2.5v5.5l-3 1z" fill="#1420a8"/><circle cx="5.3" cy="9" r="3.3" fill="#1818a8"/><circle cx="5" cy="9.3" r="2.2" fill="#0c0c80"/><path d="M5.2 7.4l1.6 1.2" stroke="#fff" stroke-width="1.1"/></svg>
<div class="a" style="left:92px;top:522.0px;font-size:10px;color:#2c2c84;white-space:nowrap;width:127px;overflow:hidden;transform:scaleX(.97);transform-origin:0 0">(+) крышка триммеров</div>
<svg style="left:55px;top:540.8px" width="9" height="9" viewBox="0 0 9 9"><rect x=".5" y=".5" width="8" height="8" fill="#fff" stroke="#a4a29a"/><path d="M2 4.5h5M4.5 2v5" stroke="#1a1a6c" stroke-width="1.1"/></svg>
<div class="a" style="left:64px;top:545.3px;width:7px;height:1px;background:repeating-linear-gradient(90deg,#aeaca4 0 1px,transparent 1px 2px)"></div>
<svg style="left:72px;top:537.8px" width="14" height="14" viewBox="0 0 14 14"><path d="M0 3.5L3.5 0H10l4 4v7l-3 3H0z" fill="#0c0c70"/><rect x="1.2" y="4.2" width="8.6" height="8.8" fill="#3ad4f4"/><path d="M8.5 1.2l4.3 4.3-.9.9L7.6 2.1z" fill="#50e0f8"/><path d="M10 4.5l3 2.5v5.5l-3 1z" fill="#1420a8"/><circle cx="5.3" cy="9" r="3.3" fill="#1818a8"/><circle cx="5" cy="9.3" r="2.2" fill="#0c0c80"/><path d="M5.2 7.4l1.6 1.2" stroke="#fff" stroke-width="1.1"/></svg>
<div class="a" style="left:92px;top:539.3px;font-size:10px;color:#2c2c84;white-space:nowrap;width:127px;overflow:hidden;transform:scaleX(.97);transform-origin:0 0">(+) кнюппель</div>
<svg style="left:35px;top:558.2px" width="9" height="9" viewBox="0 0 9 9"><rect x=".5" y=".5" width="8" height="8" fill="#fff" stroke="#a4a29a"/><path d="M2 4.5h5M4.5 2v5" stroke="#1a1a6c" stroke-width="1.1"/></svg>
<div class="a" style="left:44px;top:562.7px;width:7px;height:1px;background:repeating-linear-gradient(90deg,#aeaca4 0 1px,transparent 1px 2px)"></div>
<svg style="left:51px;top:554.7px" width="16" height="16" viewBox="0 0 16 16"><path d="M6.5,5 V11.5 A1.5,1.5 0 0 0 9.5,11.5 V3.5 A3,3 0 0 0 3.5,3.5 V12 A4.5,4.5 0 0 0 12.5,12 V6" transform="rotate(38 8 8) translate(0 -1)" fill="none" stroke="#10107c" stroke-width="1.7"/></svg>
<div class="a" style="left:72px;top:556.7px;font-size:10px;color:#2c2c84;white-space:nowrap;transform:scaleX(.97);transform-origin:0 0">Сопряжения</div>
<div class="a" style="left:23px;top:595px;width:215px;height:18px;background:linear-gradient(180deg,#fbfaf6,#e4e1d6 60%,#d2cfc2)"></div>
<div class="a" style="left:87px;top:595px;width:146px;height:1px;background:#4a4ab0"></div>
<div class="a" style="left:23px;top:593px;width:210px;height:2px;background:#f4f3ee"></div>
<div class="a" style="left:24px;top:595px;width:64px;height:18px;background:#f7f6f0;border-right:1px solid #3434a0;border-bottom:2px solid #3434a0;border-radius:0 0 2px 0"></div>
<div class="a" style="left:29px;top:599px;font-size:10px;font-style:italic;color:#3434b4;white-space:nowrap;transform:scaleX(.88);transform-origin:0 0">Построение</div>
<div class="a" style="left:238px;top:81px;width:762px;height:532px;background:#4c5458"></div>
<div class="a" style="left:240px;top:81px;width:758px;height:532px;background:linear-gradient(180deg,#6aa4de 0%,#86b6e6 20%,#a6caee 40%,#c6ddf3 60%,#e4eff9 80%,#fdfeff 100%)"></div>
<div class="a" style="left:998px;top:81px;width:2px;height:532px;background:#f0efe8"></div>
<div class="a" style="left:240px;top:81px;width:758px;height:1px;background:#5a86b4"></div>
<svg style="left:0;top:0" width="1000" height="750" viewBox="0 0 1000 750">
<defs>
<linearGradient id="gcyl" x1="0" y1="0" x2="0" y2="1"><stop offset="0" stop-color="#b8def2"/><stop offset=".35" stop-color="#a8d0e6"/><stop offset=".7" stop-color="#8eb2c6"/><stop offset="1" stop-color="#6e90a4"/></linearGradient>
<linearGradient id="gstk" x1="0" y1="0" x2="1" y2="0"><stop offset="0" stop-color="#a8c8d8"/><stop offset=".3" stop-color="#a0c0d0"/><stop offset=".6" stop-color="#8eaebe"/><stop offset=".78" stop-color="#7a98aa"/><stop offset="1" stop-color="#8aa2b0"/></linearGradient>
<linearGradient id="gbase" x1="0" y1="0" x2="1" y2="0"><stop offset="0" stop-color="#90b2c4"/><stop offset=".45" stop-color="#9abccc"/><stop offset="1" stop-color="#7090a4"/></linearGradient>
<linearGradient id="ghous" x1="0" y1="0" x2="1" y2="1"><stop offset="0" stop-color="#aac8da"/><stop offset=".6" stop-color="#94b2c4"/><stop offset="1" stop-color="#809eb0"/></linearGradient>
<linearGradient id="gtop" x1="0" y1="0" x2="0" y2="1"><stop offset="0" stop-color="#c4e4f4"/><stop offset="1" stop-color="#9cc0d4"/></linearGradient>
</defs>
<g stroke="#0c1424" stroke-width="1.35" stroke-linejoin="round">
<!-- base -->
<path d="M548,366 C546.5,400 545.5,430 545,447 L544,466 C546,475 560,478.5 574,478.5 C592,478.5 606,475 608.5,471 L609.5,447 C609.5,437 611,427 617,416 C623,406 631,399 635.6,390 L638.5,374 C632,365 605,360 580,360 C562,360 549,362 548,366 Z" fill="url(#gbase)"/>
<path d="M544.5,447.5 C556,452 590,454 609.5,448 M545,455 C560,461 595,461 609,455 M544,466 C560,472 595,472 608.5,466" fill="none"/>
<path d="M556.5,446 L559.8,386.8 M551,446 L552,373.6 M600,448 C603,420 606,400 606,382" fill="none" stroke-width=".9"/>
<path d="M548.8,369.2 C556,374 570,379 590,381 C606,382 622,380 638,374 M557.6,374.7 C566,370 576,367 588,365.5" fill="none"/>
<path d="M618,366 C626,362 636,364 639,372 C640,378 638,382 635,384 L616,384 Z" fill="#a8c4d4" stroke-width="1"/><path d="M612.6,381.3 L634.6,380.5 L634.6,391 L613.7,392 Z" fill="#1e2024" stroke-width="1"/><path d="M614,390 L634,389 L633,394 L615,394.5 Z" fill="#b8ccd8" stroke-width=".8"/>
<path d="M554.5,375 L560,374.5 L565,378 L563.5,387 L556,386 Z" fill="#26282c" stroke-width=".9"/>
<!-- stick -->
<path d="M560,213 C565,217 566.5,222 566.7,230 L567.3,252.7 C568,262 578,264 579.3,270 L580,290 L579.6,312 L576.4,344 L574,354.4 C580,360 590,363.2 600,363.2 C612,363.2 622,362 627.6,358.4 L632.4,328 L632.4,280 L632,264 L630.7,250 L628.7,243.3 C628,236 625,231 621.3,227.3 Z" fill="url(#gstk)"/>
<path d="M597,232 L598.8,280 L594,361.6 M618.7,232 L619.6,280 L616.4,360 M626.7,233 L628,300 L623,358 M579.3,266 C590,268 615,268 630.7,264.7 M566,230 L621,229" fill="none" stroke-width=".9"/>
<path d="M612,226 C620,224 628,228 630.5,236 L631,246 L614,246 Z" fill="#9ab2c2" stroke-width="1"/>
<!-- trigger -->
<path d="M545.2,292.9 L555.4,291.8 C560,300 562,305 564.5,311 C568,320 570.5,326 571.3,328 C573,334 573.5,337 573.5,339.4 L572.4,347.4 L565.6,348.5 L565.6,357.6 L554.3,363.2 L546.3,362 L544,353 L545.2,348.5 L558.8,336 C557,332 556.5,330 556,328 C553,320 551,313 549.7,307.7 Z" fill="#5c544e"/>
<path d="M549.7,307.7 L558.8,336 L565.6,348.5 M552,350 L556,360" fill="none" stroke-width=".8"/>
<ellipse cx="550" cy="362.5" rx="5" ry="3.5" fill="#c0d4e0" stroke-width="1"/>
<path d="M628,344 L640,350 L640,358 L628,358 Z" fill="#3a3430"/>
<!-- housing -->
<path d="M553,126 L578,124 L620,122.5 C626,123 630,129 631,136.7 L630,151 C626,156 621,159 618,161.7 L613,168 L623,223 L618,231.7 C605,233 585,233 570,230 L566,213 L556,213 L556,160 Z" fill="url(#ghous)"/>
<!-- upper housing light -->
<path d="M502.7,160.7 L502.7,146 C508,140 516,134 533,130 C545,127 553,126 560,125.5 C556,135 555,150 556,160.7 Z" fill="url(#gtop)"/>
<path d="M503,150.7 L556,150.7 M541,132 C536,137 534,143 533.5,150.7 M552,129 C548,136 547,146 546.7,157.3 M502.7,144.5 L516,151 M516.7,151 V160" fill="none" stroke-width="1"/><path d="M503,157.3 L557,157.3" stroke-width="1.8"/>
<!-- cylinder -->
<path d="M560,160.7 L500,160.7 C490,163 487,172 486.7,182 C486.5,195 489,204 496,208.7 L560,213.3 Z" fill="url(#gcyl)"/>
<!-- light pillar -->
<path d="M580,157 L588,156.5 L596,215 L585,215 Z" fill="#a6c2d4" stroke-width=".9"/>
<!-- dial -->
<ellipse cx="564" cy="185" rx="22.5" ry="23.5" fill="#55585c" stroke-width="1.3"/>
<ellipse cx="567" cy="185.5" rx="17" ry="19" fill="#3e4044" stroke="#1a1a1c" stroke-width="1"/>
<ellipse cx="570" cy="186" rx="11" ry="14.5" fill="#1a1a1c" stroke="none"/><path d="M562,176 L578,196 M560,184 L574,199 M566,172 L580,190" stroke="#2a2a2c" stroke-width=".8"/>
<path d="M553,172 C548,180 548,193 554,201" fill="none" stroke="#7a7c80" stroke-width="1"/>
<!-- sockets -->
<ellipse cx="571.5" cy="147" rx="14" ry="12.3" fill="#868c92" stroke-width="1.2"/>
<ellipse cx="601" cy="143.5" rx="14" ry="15.7" fill="#7a7e84" stroke-width="1.2"/>
<ellipse cx="620" cy="139" rx="10" ry="11.5" fill="#b0cad8" stroke-width="1.1"/>
<!-- plate -->
<path d="M595,163.3 L611.7,165 L623,223 L618,231.7 L605,228 L593,170 Z" fill="#6a6662" stroke-width="1.3"/>
<path d="M597.5,168 L609,169 L619.5,222 L616,227 L606,224 Z" fill="#3c3836" stroke="none"/>
<path d="M608,190 L613,189 L616,207 L611,208 Z" fill="#e8f0f4" stroke="#222" stroke-width=".8"/>
<circle cx="603" cy="172" r="1.8" fill="#1a1a1a" stroke="none"/><circle cx="606" cy="180" r="1.8" fill="#1a1a1a" stroke="none"/><circle cx="616" cy="214" r="1.8" fill="#1a1a1a" stroke="none"/><circle cx="617" cy="224" r="1.8" fill="#1a1a1a" stroke="none"/>
<!-- knobs -->
<ellipse cx="602.6" cy="143.5" rx="11" ry="13.7" fill="#050505" stroke="none"/>
<path d="M563.5,140 C562,144 562,151 563.5,155" fill="none" stroke="#f4f4f4" stroke-width="1.8"/>
<ellipse cx="571" cy="147.7" rx="5.5" ry="9" fill="#d81c24" stroke="#4a0a0a" stroke-width="1"/>
<ellipse cx="579.7" cy="147.3" rx="7.2" ry="9.2" fill="#e42830" stroke="#4a0a0a" stroke-width="1.1"/>
<ellipse cx="580" cy="147.5" rx="3.4" ry="3.8" fill="#8c9296" stroke="#5a1010" stroke-width=".9"/>
<ellipse cx="621" cy="139" rx="5.5" ry="6" fill="#8ca4b4" stroke-width=".9"/>
<rect x="620" y="135.5" width="4.5" height="7" fill="#f2f2f2" stroke="none"/>
<rect x="624.5" y="135.5" width="4" height="7" fill="#a8a8a8" stroke="none"/>
<!-- ribbed knob -->
<path d="M500.5,143 L500.5,125 C500.5,122 503,121.5 507,121.5 C511,121.5 513.8,122.5 513.8,125 L513.8,143 Z" fill="#2e2a26"/>
<path d="M502,126h11M502,129h11M502,132h11M502,135h11M502,138h11" stroke="#5a544c" stroke-width=".9"/>
<!-- labels -->
<path d="M513,165h8M523,165h7M517,170h8M572,224h17M592,224h5" stroke="#1a1a1a" stroke-width="2.2"/><path d="M566,230 L621,231" stroke-width="1"/>
</g>
<!-- small axes in model -->
<path d="M578,441 V411" stroke="#3a8ae0" stroke-width="1"/>
<path d="M578,441 L598,449" stroke="#60d040" stroke-width="1.2"/>
<path d="M578,441 L558,444" stroke="#d09090" stroke-width="1"/>
<!-- triad -->
<path d="M279,552 L279,572" stroke="#1a88e0" stroke-width="2.5"/>
<path d="M277,556 L279,548 L281,556 Z" fill="#1a88e0"/>
<path d="M279,572 L262,575" stroke="#d01818" stroke-width="2.5"/>
<path d="M265,572 L259,576 L266,578 Z" fill="#d01818"/>
<path d="M279,572 L293,578" stroke="#18c018" stroke-width="2.8"/>
<path d="M290,575 L296,580 L289,581 Z" fill="#18c018"/>
<text x="277" y="545.5" font-family="Liberation Sans" font-size="10" fill="#3090c8">Z</text>
<text x="250" y="581" font-family="Liberation Sans" font-size="10" fill="#a03a3a">X</text>
<text x="296" y="585" font-family="Liberation Sans" font-size="10" fill="#60b060">Y</text>
</svg>
<div class="a" style="left:0;top:613px;width:1000px;height:3px;background:#ebe9e0"></div>
<div class="a" style="left:22px;top:616px;width:978px;height:3px;background:#8e8c84"></div>
<div class="a" style="left:0;top:619px;width:1000px;height:62px;background:#dcd9cf"></div>
<div class="a" style="left:22px;top:619px;width:978px;height:6px;background:linear-gradient(180deg,#e4e2d8,#eeece6)"></div>
<div class="a grip" style="left:23px;top:627px;height:46px"></div>
<div class="a" style="left:28px;top:626px;width:22px;height:49px;background:linear-gradient(180deg,#f6f5f0 0%,#f0efe8 60%,#dcd9cc 100%)"></div>
<svg style="left:30px;top:628px" width="15" height="15" viewBox="0 0 15 15"><path d="M4.5 .5h6l4 4v6l-4 4h-6l-4-4v-6z" fill="#e01818" stroke="#a00" stroke-width=".5"/><text x="7.5" y="9.5" font-size="4.6" font-weight="bold" font-family="Liberation Sans" fill="#fff" text-anchor="middle">STOP</text></svg>
<svg style="left:32px;top:648px" width="13" height="14" viewBox="0 0 13 14"><path d="M1 1h11v10H9l-1 2.5L6 11H1z" fill="#d8ecff" stroke="#1a3ab8" stroke-width="1.2"/><text x="6.5" y="9.3" font-size="9" font-weight="bold" font-family="Liberation Sans" fill="#111" text-anchor="middle">?</text></svg>
<div class="a" style="left:50px;top:626px;width:945px;height:30px;background:linear-gradient(180deg,#fdfdfb 0%,#f0efea 40%,#d6d3c6 100%);border:1px solid #9a988c;border-bottom:2px solid #5454a4;border-right-color:#8a887c"></div>
<div class="a" style="left:50px;top:656px;width:945px;height:20px;background:linear-gradient(180deg,#f7f6f2 0%,#e8e6de 60%,#d4d1c4 100%)"></div>
<div class="a" style="left:50px;top:655px;width:74px;height:20px;background:#f4f3ee;border-right:1.5px solid #5454a4;border-bottom:2px solid #5454a4;border-radius:0 0 2px 0"></div>
<svg style="left:54px;top:657px" width="16" height="16" viewBox="0 0 16 16"><path d="M6.5,2 A6,6 0 0 0 4.2,12.5" fill="none" stroke="#000" stroke-width="1.7"/><path d="M2,10.5 L7.5,11.5 L3,15.5 Z" fill="#000"/><path d="M9.5,13.8 A6,6 0 0 0 11.8,3.5" fill="none" stroke="#000" stroke-width="1.7"/><path d="M14,5.5 L8.5,4.5 L13,0.5 Z" fill="#000"/></svg>
<div class="a" style="left:70px;top:661px;font-size:10.5px;font-style:italic;color:#3434b0;white-space:nowrap;transform:scaleX(.88);transform-origin:0 0">Повернуть</div>
<div class="a" style="left:0;top:675px;width:1000px;height:7px;background:#f4f3ee"></div>
<div class="a" style="left:0;top:679px;width:910px;height:3px;border-top:1px solid #a8a69c;border-right:1px solid #a8a69c;background:#f0efe8"></div>
<div class="a" style="left:912px;top:679px;width:73px;height:3px;border-top:1px solid #a8a69c;border-left:1px solid #a8a69c;border-right:1px solid #a8a69c;background:#f0efe8"></div>
<div class="a" style="left:0;top:682px;width:1000px;height:68px;background:#d4d0c8;border-top:1px solid #fff"></div>
<div class="a" style="left:2px;top:685px;width:44px;height:20px;background:#d4d0c8;border:1px solid #fff;border-right-color:#404040;border-bottom-color:#404040;box-shadow:inset -1px -1px 0 #808080"></div>
<svg style="left:4px;top:687px" width="14" height="14" viewBox="0 0 14 14"><path d="M1 2.5c2-1 4-1 6 0v5c-2-1-4-1-6 0z" fill="#f05a28"/><path d="M7.5 2.5c2 1 4 1 6 0v5c-2 1-4 1-6 0z" fill="#7cbb00"/><path d="M1 8c2-1 4-1 6 0v5c-2-1-4-1-6 0z" fill="#00a1f1"/><path d="M7.5 8c2 1 4 1 6 0v5c-2 1-4 1-6 0z" fill="#ffbb00"/></svg>
<div class="a" style="left:19px;top:689px;font-size:11px;font-style:italic;font-weight:bold;color:#2020c8;white-space:nowrap;transform:scaleX(.92);transform-origin:0 0">Пуск</div>
<div class="a" style="left:52px;top:687px;width:3px;height:58px;background:#fff;border-left:1px solid #a0a0a0"></div>
<div class="a" style="left:143px;top:687px;width:3px;height:58px;background:#fff;border-left:1px solid #a0a0a0"></div>
<div class="a" style="left:849px;top:687px;width:3px;height:58px;background:#fff;border-left:1px solid #a0a0a0"></div>
<div class="a" style="left:876px;top:705px;width:3px;height:23px;background:#fff;border-left:1px solid #a0a0a0"></div>
<svg style="left:60px;top:690px" width="15" height="15" viewBox="0 0 15 15"><path d="M1 4h5l1 1h7v8H1z" fill="#e8c860" stroke="#a07820" stroke-width=".8"/><circle cx="8" cy="8" r="3" fill="#c8e8f8" stroke="#6a8aa8"/></svg>
<svg style="left:80px;top:690px" width="15" height="15" viewBox="0 0 15 15"><rect x="1" y="1" width="13" height="13" fill="#1818a0"/><rect x="3" y="1" width="8" height="4" fill="#fff"/><rect x="3" y="8" width="9" height="2" fill="#d02020"/><rect x="3" y="10.5" width="9" height="2" fill="#fff"/></svg>
<svg style="left:100px;top:690px" width="15" height="15" viewBox="0 0 15 15"><rect x="1" y="1" width="13" height="12" rx="2" fill="#e86820" stroke="#a83810"/><rect x="3" y="3" width="9" height="6" fill="#f8c040"/></svg>
<svg style="left:120px;top:690px" width="15" height="15" viewBox="0 0 15 15"><ellipse cx="8" cy="7.5" rx="4.5" ry="6" fill="none" stroke="#c02020" stroke-width="2.6"/><ellipse cx="5" cy="10" rx="3" ry="2" fill="#888" opacity=".6"/></svg>
<svg style="left:60px;top:710px" width="15" height="15" viewBox="0 0 15 15"><path d="M2 10L10 2l4 4-8 8z" fill="#e8a830" stroke="#6a4a10"/><path d="M4 8l4 4M7 5l4 4" stroke="#6a4a10"/></svg>
<svg style="left:80px;top:710px" width="15" height="15" viewBox="0 0 15 15"><rect x="1" y="1" width="13" height="13" rx="1.5" fill="#10a040" stroke="#087028"/><path d="M5 4v7M5 9c0 1.5 4 1.5 4 0V4" stroke="#fff" stroke-width="1.6" fill="none"/></svg>
<svg style="left:100px;top:710px" width="15" height="15" viewBox="0 0 15 15"><path d="M4 2v8c0 2 2 3 5 3h4" stroke="#2aa070" stroke-width="2" fill="none"/><ellipse cx="9" cy="12" rx="5" ry="2" fill="#8888a8"/></svg>
<svg style="left:120px;top:710px" width="15" height="15" viewBox="0 0 15 15"><circle cx="7.5" cy="7.5" r="6" fill="#40b820"/><circle cx="7.5" cy="7.5" r="2.5" fill="#f8f040"/><path d="M7.5 1v13M1 7.5h13M3 3l9 9M12 3l-9 9" stroke="#208010" stroke-width=".7"/></svg>
<svg style="left:60px;top:729px" width="15" height="15" viewBox="0 0 15 15"><circle cx="7.5" cy="7.5" r="6.5" fill="#f8e8e0" stroke="#c84040"/><circle cx="7.5" cy="7.5" r="5" fill="#d83010"/><path d="M3 9a5 5 0 0 0 9 0z" fill="#f89820"/></svg>
<svg style="left:80px;top:729px" width="15" height="15" viewBox="0 0 15 15"><rect x="1" y="2" width="14" height="9" fill="#a8e8a8" stroke="#408040"/><path d="M4 11l-1 3M12 11l1 3M6 5h4" stroke="#408040"/></svg>
<svg style="left:100px;top:729px" width="15" height="15" viewBox="0 0 15 15"><circle cx="7.5" cy="7.5" r="6.5" fill="#3a90d8"/><path d="M5 3.5v8M5 7.5l4.5-4M6 6.5l4 4" stroke="#fff" stroke-width="1.6"/></svg>
<svg style="left:120px;top:729px" width="15" height="15" viewBox="0 0 15 15"><ellipse cx="7.5" cy="7" rx="6.5" ry="5" fill="#5a80b8" stroke="#304878"/><circle cx="8" cy="7" r="2" fill="#fff"/><path d="M3 11l-1 3 4-2" fill="#5a80b8"/></svg>
<div class="a" style="left:150px;top:685px;width:139px;height:20px;background:#d4d0c8;border:1px solid #fff;border-right-color:#404040;border-bottom-color:#404040;box-shadow:inset -1px -1px 0 #808080"></div>
<svg style="left:155px;top:688px" width="14" height="14" viewBox="0 0 14 14"><path d="M2 10L10 2l3 3-8 8z" fill="#e8a830" stroke="#6a4a10"/><path d="M4 8l3 3M7 5l3 3" stroke="#6a4a10"/></svg>
<div class="a" style="left:172px;top:689px;font-size:10.5px;font-style:italic;color:#2c2cb0;white-space:nowrap;transform:scaleX(.9);transform-origin:0 0">182. The Blood Hound G...</div>
<div class="a" style="left:291px;top:685px;width:139px;height:20px;background:#e9e7e1;border:1px solid #404040;border-right-color:#fff;border-bottom-color:#fff;box-shadow:inset 1px 1px 0 #808080"></div>
<svg style="left:295px;top:688px" width="14" height="14" viewBox="0 0 14 14"><circle cx="7" cy="7" r="6.3" fill="#3a98e0" stroke="#1a5aa0" stroke-width=".6"/><path d="M4.5 3v8M4.6 7.2L9 3.2M5.8 6.2l4.4 4.4" stroke="#fff" stroke-width="1.6" fill="none"/></svg>
<div class="a" style="left:313px;top:689px;font-size:10.5px;font-style:italic;font-weight:bold;color:#1a1ab0;white-space:nowrap;transform:scaleX(.88);transform-origin:0 0">КОМПАС-3D V10 (ЗА...</div>
<div class="a" style="left:433px;top:685px;width:139px;height:20px;background:#d4d0c8;border:1px solid #fff;border-right-color:#404040;border-bottom-color:#404040;box-shadow:inset -1px -1px 0 #808080"></div>
<svg style="left:437px;top:688px" width="15" height="14" viewBox="0 0 15 14"><path d="M1 3h5l1 1.5h7V13H1z" fill="#f0d880" stroke="#a08030" stroke-width=".8"/><circle cx="7" cy="8" r="3" fill="#d8eef8" stroke="#7a98b0" stroke-width=".8"/></svg>
<div class="a" style="left:455px;top:689px;font-size:10.5px;font-style:italic;color:#2c2cb0;white-space:nowrap;transform:scaleX(.9);transform-origin:0 0">Мой компьютер</div>
<div class="a" style="left:859px;top:710px;width:15px;height:14px;background:#10246a;color:#fff;font-size:9px;line-height:14px;text-align:center">RU</div>
<div class="a" style="left:882px;top:686px;width:116px;height:61px;border:1px solid #808080;border-right-color:#fff;border-bottom-color:#fff;background:#d4d0c8"></div>
<div class="a" style="left:885px;top:709px;font-size:12px;font-weight:bold;color:#2020b8">«</div>
<svg style="left:897px;top:696px" width="15" height="15" viewBox="0 0 15 15"><rect x="1" y="1" width="12" height="12" rx="1" fill="#10a040" stroke="#0a6a28"/><path d="M5 3.5v7M5 8.5c0 1.5 4 1.5 4 0V3.5" stroke="#fff" stroke-width="1.6" fill="none"/></svg>
<svg style="left:913px;top:696px" width="15" height="15" viewBox="0 0 15 15"><rect x="5" y="1" width="8" height="6" fill="#6ab0f0" stroke="#2a68b0" stroke-width=".7"/><rect x="1" y="5" width="8" height="6" fill="#8ac8f8" stroke="#2a68b0" stroke-width=".7"/><path d="M4 12h6" stroke="#555"/></svg>
<svg style="left:897px;top:713px" width="15" height="15" viewBox="0 0 15 15"><circle cx="7" cy="6" r="5" fill="#58b838"/><rect x="5" y="7" width="8" height="6" fill="#f8f8f0" stroke="#888" stroke-width=".6"/></svg>
<svg style="left:913px;top:713px" width="15" height="15" viewBox="0 0 15 15"><circle cx="6" cy="4" r="3" fill="#2a6aa8"/><path d="M1 13l5-7 5 7" stroke="#5a8ac8" stroke-width="1.4" fill="none"/><circle cx="11" cy="11" r="3" fill="#e03a20"/><path d="M9.5 9.5l3 3M12.5 9.5l-3 3" stroke="#fff" stroke-width=".9"/></svg>
<svg style="left:897px;top:730px" width="15" height="15" viewBox="0 0 15 15"><rect x="1" y="1" width="13" height="13" fill="#f8b838"/><circle cx="7" cy="7" r="5" fill="#fff" stroke="#f09020" stroke-width="1.5"/><circle cx="7" cy="7" r="2" fill="#e05010"/></svg>
<svg style="left:913px;top:730px" width="15" height="15" viewBox="0 0 15 15"><path d="M4 1l3.5 4H5.5v4h-3V5H.5z" fill="#20c020" stroke="#0a600a" stroke-width=".5"/><path d="M10 14l-3.5-4h2V6h3v4h2z" fill="#20c020" stroke="#0a600a" stroke-width=".5"/></svg>
<div class="a" style="left:930px;top:694.5px;width:66px;text-align:center;font-size:10px;font-style:italic;color:#2a2ab0;white-space:nowrap;transform:scaleX(.95);transform-origin:50% 0">13:14</div>
<div class="a" style="left:930px;top:711.5px;width:66px;text-align:center;font-size:10px;font-style:italic;color:#2a2ab0;white-space:nowrap;transform:scaleX(.95);transform-origin:50% 0">вторник</div>
<div class="a" style="left:930px;top:727.5px;width:66px;text-align:center;font-size:10px;font-style:italic;color:#2a2ab0;white-space:nowrap;transform:scaleX(.95);transform-origin:50% 0">17.11.2009</div>
</body></html>
